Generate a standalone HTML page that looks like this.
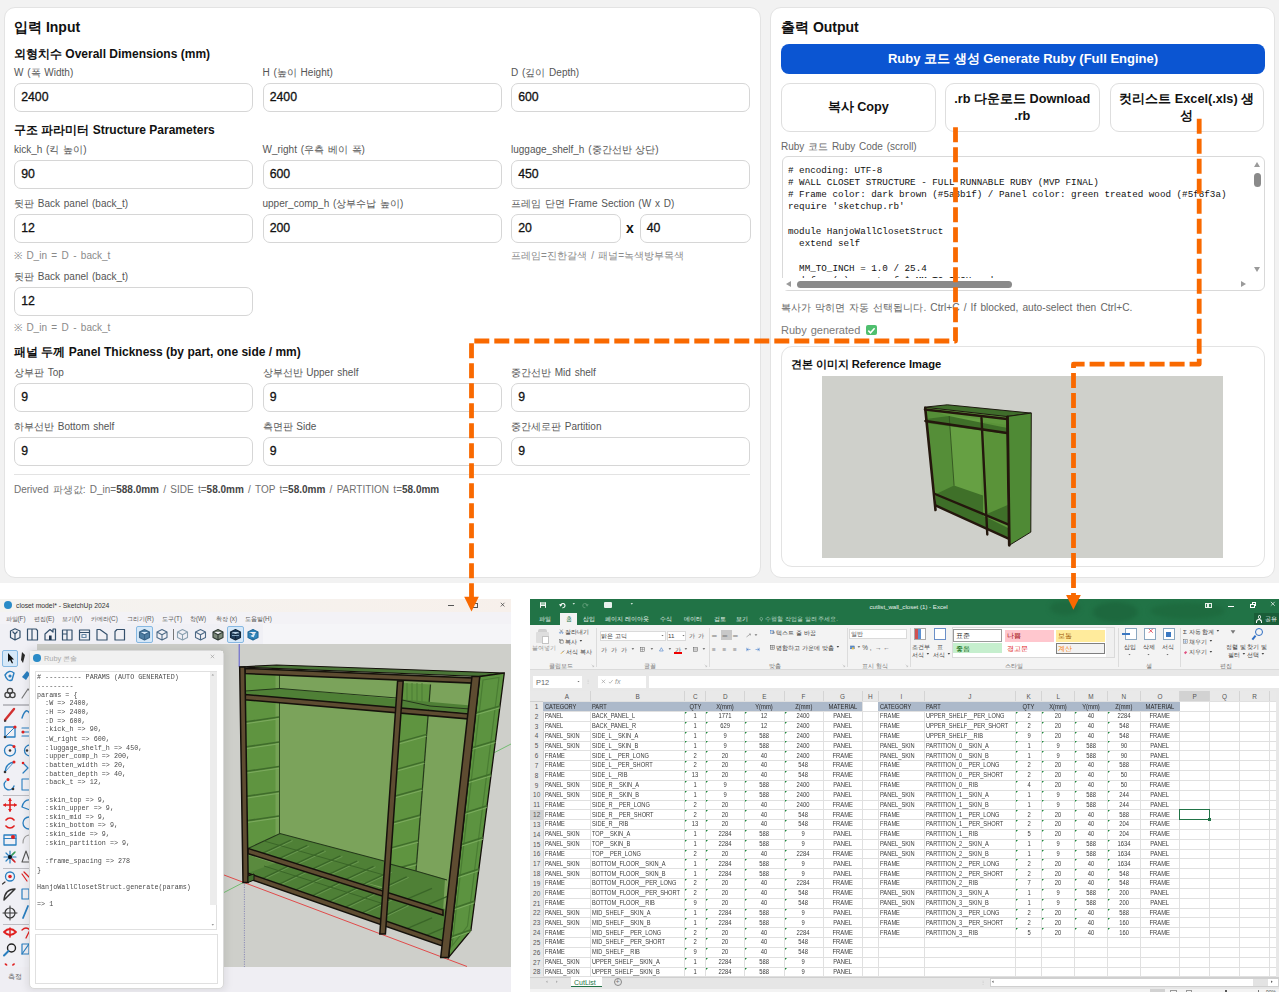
<!DOCTYPE html>
<html><head><meta charset="utf-8">
<style>
*{box-sizing:border-box;margin:0;padding:0}
html,body{width:1279px;height:992px;overflow:hidden;background:#fff}
body{position:relative;font-family:"Liberation Sans",sans-serif;color:#111}
.a{position:absolute;white-space:nowrap}
.card{position:absolute;background:#fff;border:1px solid #e3e3e3;border-radius:11px}
.inp{position:absolute;height:29px;width:239px;border:1px solid #d6d6d6;border-radius:7px;background:#fff;font-size:12.3px;color:#111;padding-left:6.2px;line-height:27px;-webkit-text-stroke:0.3px #111}
.lbl{position:absolute;font-size:10px;word-spacing:1px;color:#555;white-space:nowrap;line-height:12px}
.h2{position:absolute;font-size:12px;font-weight:bold;color:#111;white-space:nowrap;line-height:14px}
.note{position:absolute;font-size:10px;word-spacing:1.6px;color:#8a8a8a;white-space:nowrap;line-height:12px}
.btn{position:absolute;top:83px;height:48.5px;width:154.5px;border:1px solid #dedede;border-radius:9px;background:#fff;font-weight:bold;font-size:12.7px;color:#111;text-align:center;display:flex;align-items:center;justify-content:center;line-height:17px}
.code{position:absolute;left:788px;top:164.5px;font-family:"Liberation Mono",monospace;font-size:9.25px;line-height:12.3px;color:#111;white-space:pre}
</style><style>
.xc{font-size:7.3px;line-height:8px;transform-origin:0 0;transform:scaleX(.78)}
.xcc{text-align:center;transform:none}
.xcc span{display:inline-block;transform:scaleX(.8)}
.tri{width:0;height:0;border-top:2.2px solid #1e8a3c;border-right:2.2px solid transparent}
</style></head><body>
<!-- TOP WEB APP -->
<div class="a" style="left:0;top:0;width:1279px;height:583px;background:#f2f2f2"></div>
<div class="card" style="left:4px;top:7px;width:757px;height:571px"></div>
<div class="card" style="left:770.3px;top:7px;width:504.7px;height:571px"></div>

<div class="a" style="left:14px;top:19px;font-size:14px;font-weight:bold;line-height:17px">입력 Input</div>
<div class="h2" style="left:14px;top:47px">외형치수 Overall Dimensions (mm)</div>
<div class="lbl" style="left:14px;top:67px">W (폭 Width)</div>
<div class="lbl" style="left:262.5px;top:67px">H (높이 Height)</div>
<div class="lbl" style="left:511px;top:67px">D (깊이 Depth)</div>
<div class="inp" style="left:14px;top:83px">2400</div>
<div class="inp" style="left:262.5px;top:83px">2400</div>
<div class="inp" style="left:511px;top:83px">600</div>

<div class="h2" style="left:14px;top:123px">구조 파라미터 Structure Parameters</div>
<div class="lbl" style="left:14px;top:144px">kick_h (킥 높이)</div>
<div class="lbl" style="left:262.5px;top:144px">W_right (우측 베이 폭)</div>
<div class="lbl" style="left:511px;top:144px">luggage_shelf_h (중간선반 상단)</div>
<div class="inp" style="left:14px;top:160px">90</div>
<div class="inp" style="left:262.5px;top:160px">600</div>
<div class="inp" style="left:511px;top:160px">450</div>

<div class="lbl" style="left:14px;top:198px">뒷판 Back panel (back_t)</div>
<div class="lbl" style="left:262.5px;top:198px">upper_comp_h (상부수납 높이)</div>
<div class="lbl" style="left:511px;top:198px">프레임 단면 Frame Section (W x D)</div>
<div class="inp" style="left:14px;top:214px">12</div>
<div class="inp" style="left:262.5px;top:214px">200</div>
<div class="inp" style="left:511px;top:214px;width:110px">20</div>
<div class="a" style="left:626px;top:220px;font-size:14px;font-weight:bold;line-height:16px">x</div>
<div class="inp" style="left:639.5px;top:214px;width:111px">40</div>
<div class="note" style="left:14px;top:250px">※ D_in = D - back_t</div>
<div class="note" style="left:511px;top:250px">프레임=진한갈색 / 패널=녹색방부목색</div>

<div class="lbl" style="left:14px;top:271px">뒷판 Back panel (back_t)</div>
<div class="inp" style="left:14px;top:287px">12</div>
<div class="note" style="left:14px;top:322px">※ D_in = D - back_t</div>

<div class="h2" style="left:14px;top:345px">패널 두께 Panel Thickness (by part, one side / mm)</div>
<div class="lbl" style="left:14px;top:367px">상부판 Top</div>
<div class="lbl" style="left:262.5px;top:367px">상부선반 Upper shelf</div>
<div class="lbl" style="left:511px;top:367px">중간선반 Mid shelf</div>
<div class="inp" style="left:14px;top:383px">9</div>
<div class="inp" style="left:262.5px;top:383px">9</div>
<div class="inp" style="left:511px;top:383px">9</div>
<div class="lbl" style="left:14px;top:421px">하부선반 Bottom shelf</div>
<div class="lbl" style="left:262.5px;top:421px">측면판 Side</div>
<div class="lbl" style="left:511px;top:421px">중간세로판 Partition</div>
<div class="inp" style="left:14px;top:437px">9</div>
<div class="inp" style="left:262.5px;top:437px">9</div>
<div class="inp" style="left:511px;top:437px">9</div>
<div class="a" style="left:14px;top:474px;width:736px;height:1px;background:#e3e3e3"></div>
<div class="lbl" style="left:14px;top:484px;color:#707070;word-spacing:1.5px">Derived 파생값: D_in=<b style="color:#444">588.0mm</b> / SIDE t=<b style="color:#444">58.0mm</b> / TOP t=<b style="color:#444">58.0mm</b> / PARTITION t=<b style="color:#444">58.0mm</b></div>

<!-- OUTPUT -->
<div class="a" style="left:781px;top:19px;font-size:14px;font-weight:bold;line-height:17px">출력 Output</div>
<div class="a" style="left:781px;top:44px;width:484px;height:29.5px;border-radius:8px;background:#0b55d2;color:#fff;font-weight:bold;font-size:13px;text-align:center;line-height:30px">Ruby 코드 생성 Generate Ruby (Full Engine)</div>
<div class="btn" style="left:781px">복사 Copy</div>
<div class="btn" style="left:945px;padding-top:1.5px">.rb 다운로드 Download<br>.rb</div>
<div class="btn" style="left:1109.5px;padding-top:1.5px">컷리스트 Excel(.xls) 생<br>성</div>
<div class="lbl" style="left:781px;top:141px;color:#666">Ruby 코드 Ruby Code (scroll)</div>
<div class="a" style="left:781.5px;top:156px;width:483px;height:134.5px;border:1px solid #d9d9d9;border-radius:6px;background:#fff;overflow:hidden"></div>
<div class="code"># encoding: UTF-8
# WALL CLOSET STRUCTURE - FULL RUNNABLE RUBY (MVP FINAL)
# Frame color: dark brown (#5a3b1f) / Panel color: green treated wood (#5f8f3a)
require 'sketchup.rb'

module HanjoWallClosetStruct
  extend self

  MM_TO_INCH = 1.0 / 25.4
  def mm(v) = v.to_f * MM_TO_INCH end</div>
<div class="a" style="left:782px;top:278px;width:470px;height:12px;background:#fff"></div>
<div class="a" style="left:797px;top:281px;width:215px;height:7px;border-radius:4px;background:#8a8a8a"></div>
<div class="a" style="left:786px;top:281px;width:0;height:0;border-top:3.5px solid transparent;border-bottom:3.5px solid transparent;border-right:5px solid #9a9a9a"></div>
<div class="a" style="left:1241px;top:281px;width:0;height:0;border-top:3.5px solid transparent;border-bottom:3.5px solid transparent;border-left:5px solid #9a9a9a"></div>
<div class="a" style="left:1254px;top:173px;width:7px;height:13.5px;border-radius:4px;background:#8a8a8a"></div>
<div class="a" style="left:1254px;top:162px;width:0;height:0;border-left:3.5px solid transparent;border-right:3.5px solid transparent;border-bottom:5px solid #9a9a9a"></div>
<div class="a" style="left:1254px;top:267px;width:0;height:0;border-left:3.5px solid transparent;border-right:3.5px solid transparent;border-top:5px solid #9a9a9a"></div>
<div class="lbl" style="left:781px;top:302px;color:#666;font-size:10.2px;word-spacing:1.3px">복사가 막히면 자동 선택됩니다. Ctrl+C / If blocked, auto-select then Ctrl+C.</div>
<div class="lbl" style="left:781px;top:324px;color:#7a7a7a;font-size:11px">Ruby generated</div>
<div class="a" style="left:866px;top:324.5px;width:10.5px;height:10.5px;background:#4fbf6e;border-radius:2px"></div><svg class="a" style="left:866px;top:324.5px" width="11" height="11"><path d="M2.3,5.6 L4.5,7.8 L8.6,3.2" fill="none" stroke="#fff" stroke-width="1.5"/></svg>
<div class="card" style="left:781px;top:346px;width:483.5px;height:221px;border-radius:11px"></div>
<div class="h2" style="left:790.5px;top:357px;font-size:11.2px">견본 이미지 Reference Image</div>
<div class="a" style="left:822px;top:376px;width:401px;height:182px;background:#cdcdc9"></div>

<svg class="a" style="left:0;top:0" width="1279" height="992" viewBox="0 0 1279 992">
<rect x="822" y="376" width="401" height="182" fill="#cfd0cb"/>
<polygon points="924.5,407 1007,416 1008,537 936,505" fill="#5f983d"/>
<polygon points="949,416 981.5,419 981.5,500 954,486" fill="#66a043"/>
<polygon points="925,409 949,416 954,486 936,496" fill="#558e38"/>
<polygon points="984,422 1007,425 1007,505 988,514" fill="#5a9339"/>
<polygon points="926,419 949,416 1007,428 1007,434 926,423" fill="#3f7029"/>
<polygon points="984,426 1007,428 1007,434 984,430" fill="#3f7029"/>
<polygon points="936,494 954,485.6 983,495.5 983,526 936,500" fill="#3f7029"/>
<polygon points="988,513.6 1007.5,505 1008,524 988,517" fill="#3f7029"/>
<polygon points="936,496 988,518 1008,528 1008,538 936,505.7" fill="#3d6e28"/>
<polygon points="924.3,407.2 947.3,404.8 1031.3,413.1 1006.9,416.5" fill="#3f6d2b" stroke="#1e1a10" stroke-width="1"/>
<polygon points="1006.9,416.5 1031.3,413.1 1030.8,532.1 1009.3,545.3" fill="#4f8a35" stroke="#1e1a10" stroke-width="1"/>
<line x1="949.2" y1="416" x2="954.1" y2="485.6" stroke="#2c4a1c" stroke-width=".8"/>
<g stroke="#24170d" fill="none" stroke-linecap="round">
<line x1="925" y1="409.5" x2="1007" y2="419" stroke-width="2.6"/>
<line x1="925.5" y1="421" x2="1007" y2="433" stroke-width="2.6"/>
<line x1="935" y1="494" x2="1008" y2="524.3" stroke-width="2.4"/>
<line x1="936" y1="505.7" x2="1008" y2="538.4" stroke-width="2.4"/>
<line x1="925.2" y1="408" x2="935.5" y2="510" stroke-width="2.6"/>
<line x1="981.5" y1="418" x2="987.3" y2="534.5" stroke-width="2.4"/>
<line x1="1007.5" y1="417" x2="1009.3" y2="545.3" stroke-width="2.8"/>
</g>
</svg>
<div class="a" style="left:0px;top:599px;width:511px;height:393px;background:#f2f1f5;overflow:hidden"></div>
<div class="a" style="left:0px;top:599px;width:511px;height:13px;background:linear-gradient(90deg,#f4f3f0,#f7f0eb)"></div>
<div class="a" style="left:4px;top:601px;width:8px;height:8px;background:#2a8bc7;border-radius:50%"></div>
<div class="a" style="left:16px;top:601px;font-size:6.8px;color:#333;line-height:9px">closet model* - SketchUp 2024</div>
<div class="a" style="left:448px;top:605px;width:6px;height:0.9px;background:#555"></div>
<div class="a" style="left:472px;top:602.5px;width:5.5px;height:5px;border:0.9px solid #555"></div>
<div class="a" style="left:500px;top:600.2px;font-size:7.5px;color:#333;line-height:9px"><svg style="display:inline-block;vertical-align:0;overflow:visible" width="0.7em" height="0.7em" viewBox="0 0 10 10"><path d="M1.5,1.5 L8.5,8.5 M8.5,1.5 L1.5,8.5" stroke="currentColor" stroke-width="1.3" fill="none"/></svg></div>
<div class="a" style="left:0px;top:612px;width:511px;height:12px;background:#f3f2f6"></div>
<div class="a" style="left:5.5px;top:613.8px;font-size:6.3px;color:#5a5a5a;line-height:9px">파일(F)</div>
<div class="a" style="left:34px;top:613.8px;font-size:6.3px;color:#5a5a5a;line-height:9px">편집(E)</div>
<div class="a" style="left:62px;top:613.8px;font-size:6.3px;color:#5a5a5a;line-height:9px">보기(V)</div>
<div class="a" style="left:91px;top:613.8px;font-size:6.3px;color:#5a5a5a;line-height:9px">카메라(C)</div>
<div class="a" style="left:127px;top:613.8px;font-size:6.3px;color:#5a5a5a;line-height:9px">그리기(R)</div>
<div class="a" style="left:162px;top:613.8px;font-size:6.3px;color:#5a5a5a;line-height:9px">도구(T)</div>
<div class="a" style="left:190px;top:613.8px;font-size:6.3px;color:#5a5a5a;line-height:9px">창(W)</div>
<div class="a" style="left:216px;top:613.8px;font-size:6.3px;color:#5a5a5a;line-height:9px">확장 (x)</div>
<div class="a" style="left:245px;top:613.8px;font-size:6.3px;color:#5a5a5a;line-height:9px">도움말(H)</div>
<div class="a" style="left:0px;top:624px;width:511px;height:20px;background:#f0f0f5"></div>
<div class="a" style="left:263px;top:624px;width:248px;height:20px;background:#f5f5f8"></div>
<div class="a" style="left:136.3px;top:626.3px;width:16.9px;height:16.6px;background:#d6e8f8;border:1px solid #86b8e2;border-radius:2px"></div>
<div class="a" style="left:227px;top:626.3px;width:16.5px;height:16.6px;background:#d6e8f8;border:1px solid #86b8e2;border-radius:2px"></div>
<div class="a" style="left:172.5px;top:629px;width:1.1px;height:11px;background:#777"></div>
<svg class="a" style="left:0;top:0" width="270" height="646" viewBox="0 0 270 646"><g fill="none" stroke="#34506c" stroke-width="1.2" stroke-linejoin="round">
<path d="M10.5,631 L15,628.8 L20,631 L20,637.5 L15,640 L10.5,637.5 Z M15,634 L15,640 M15,634 L12.5,631.5 M15,634 L17.5,631.5"/>
<path d="M27.5,629 L36,629 L37.5,630.5 L37.5,640 L27.5,640 Z M32,629 L32,640"/>
<path d="M45,640 L45,634 L50,629.5 L53,632 L53,629 L55.5,629 L55.5,640 Z"/>
<rect x="49" y="635.5" width="2.6" height="4.5" fill="#1d3550" stroke="none"/>
<path d="M62.5,630 L72,630 L72,640 L62.5,640 Z M67,630 L67,640 M62.5,634 L67,634"/>
<path d="M79.5,630 L89.5,630 L89.5,640 L79.5,640 Z M79.5,632.5 L89.5,632.5"/>
<rect x="82" y="634.5" width="4" height="3" stroke="#6a8aa8"/>
<path d="M97,640 L97,629.5 L100,629.5 L107,634.5 L107,640 Z"/>
<path d="M115,631.5 L117,629.5 L124.5,629.5 L124.5,640 L115,640 Z"/>
</g>
<path d="M139.5,632 L144.5,629.5 L149.5,632 L149.5,637.5 L144.5,640 L139.5,637.5 Z M139.5,632 L144.5,634.7 L149.5,632 M144.5,634.7 L144.5,640" fill="#4f7ea3" stroke="#3a6488" stroke-width="1.1" stroke-linejoin="round"/>
<path d="M157,632 L162,629.5 L167,632 L167,637.5 L162,640 L157,637.5 Z M157,632 L162,634.7 L167,632 M162,634.7 L162,640" fill="none" stroke="#4d6a86" stroke-width="1.1" stroke-linejoin="round"/>
<path d="M177.5,632 L182.5,629.5 L187.5,632 L187.5,637.5 L182.5,640 L177.5,637.5 Z M177.5,632 L182.5,634.7 L187.5,632 M182.5,634.7 L182.5,640" fill="none" stroke="#8aa0b0" stroke-width="1.1" stroke-linejoin="round"/>
<path d="M195.5,632 L200.5,629.5 L205.5,632 L205.5,637.5 L200.5,640 L195.5,637.5 Z M195.5,632 L200.5,634.7 L205.5,632 M200.5,634.7 L200.5,640" fill="none" stroke="#4d6a86" stroke-width="1.1" stroke-linejoin="round"/>
<path d="M213,632 L218,629.5 L223,632 L223,637.5 L218,640 L213,637.5 Z M213,632 L218,634.7 L223,632 M218,634.7 L218,640" fill="#7d8a7a" stroke="#2f3a33" stroke-width="1.1" stroke-linejoin="round"/>
<path d="M230.5,632 L235.5,629.5 L240.5,632 L240.5,637.5 L235.5,640 L230.5,637.5 Z M230.5,632 L235.5,634.7 L240.5,632 M235.5,634.7 L235.5,640" fill="#1f3d5c" stroke="#12263a" stroke-width="1.1" stroke-linejoin="round"/>
<path d="M248,632 L253,629.5 L258,632 L258,637.5 L253,640 L248,637.5 Z M248,632 L253,634.7 L258,632 M253,634.7 L253,640" fill="#2f86bd" stroke="#236a98" stroke-width="1.1" stroke-linejoin="round"/>
<path d="M250.5,636 L256,632 L253.5,637.5 Z" fill="#d9ecf7"/>
<path d="M232,633 L239,633 M232,635.5 L239,635.5" stroke="#8fb0c8" stroke-width=".9"/>
</svg>
<div class="a" style="left:0px;top:644px;width:37px;height:323px;background:#f0f0f5"></div>
<div class="a" style="left:37px;top:644px;width:474px;height:323px;background:#cecfca"></div>
<div class="a" style="left:0px;top:967px;width:511px;height:25px;background:#efeef3"></div>
<div class="a" style="left:8px;top:972px;font-size:6.6px;color:#666;line-height:9px">측정</div>
<div class="a" style="left:2px;top:650px;width:16px;height:17px;background:#d6e8f8;border:1px solid #86b8e2;border-radius:2px"></div>
<svg class="a" style="left:0;top:640px" width="40" height="340" viewBox="0 640 40 340"><g stroke-linejoin="round" stroke-linecap="round">
<path d="M8,653 L8,662 L10,660 L12,663.5 L13,663 L11.5,659.5 L14,659.5 Z" fill="#111"/>
<path d="M22,652 L25,655 L23,663 L21,660 Z" fill="#2a2a2a"/>
<path d="M5,675 Q9,669 14,673 L12,680 Q7,682 5,675 Z" fill="none" stroke="#2a7fc0" stroke-width="1.4"/><circle cx="10" cy="676" r="1.6" fill="#2a7fc0"/>
<path d="M22,677 L27,671 L30,674 L26,680 Z" fill="#2a7fc0"/>
<circle cx="7.5" cy="695" r="2.6" fill="none" stroke="#444" stroke-width="1.3"/><circle cx="12.5" cy="695" r="2.6" fill="none" stroke="#444" stroke-width="1.3"/><circle cx="10" cy="691" r="2.6" fill="none" stroke="#444" stroke-width="1.3"/>
<path d="M22,698 L28,689 L30,691" fill="none" stroke="#777" stroke-width="1.2"/>
<path d="M5,720 L14,709" stroke="#d23030" stroke-width="2.4"/><path d="M5,720 L4.5,721.5 L6,721" stroke="#333" stroke-width="1"/>
<path d="M22,718 Q26,706 30,714" fill="none" stroke="#2a7fc0" stroke-width="1.4"/>
<rect x="5" y="727" width="10" height="10" fill="none" stroke="#2a7fc0" stroke-width="1.3"/><path d="M5,737 L15,727" stroke="#2a7fc0" stroke-width="1"/><circle cx="15" cy="727" r="1.6" fill="#e02020"/><circle cx="5" cy="737" r="1.3" fill="#333"/>
<path d="M22,728 L30,728 M22,732 L30,732 M22,736 L30,736" stroke="#2a7fc0" stroke-width="1.2"/><circle cx="23" cy="732" r="1.5" fill="#e02020"/>
<circle cx="10" cy="750.5" r="5.5" fill="none" stroke="#2a7fc0" stroke-width="1.3"/><circle cx="10" cy="750.5" r="1.3" fill="#333"/><circle cx="14" cy="746.5" r="1.5" fill="#e02020"/>
<path d="M30,745 A5.5,5.5 0 0 0 30,756" fill="none" stroke="#2a7fc0" stroke-width="1.3"/><circle cx="27" cy="750.5" r="1.2" fill="#333"/>
<path d="M5,772 Q6,763 14,762" fill="none" stroke="#2a7fc0" stroke-width="1.3"/><path d="M5,772 L14,762" stroke="#2a7fc0" stroke-width=".8"/><circle cx="14" cy="762" r="1.5" fill="#e02020"/><circle cx="5" cy="772" r="1.3" fill="#333"/>
<path d="M23,763 L28,768 L23,773" fill="none" stroke="#2a7fc0" stroke-width="1.2"/><circle cx="23" cy="763" r="1.3" fill="#e02020"/>
<path d="M6,781 A5,5 0 1 0 14,786" fill="none" stroke="#2a7fc0" stroke-width="1.3"/><circle cx="8" cy="779.5" r="1.5" fill="#e02020"/><circle cx="13" cy="789" r="1.3" fill="#333"/>
<rect x="22" y="779" width="8" height="11" fill="none" stroke="#2a7fc0" stroke-width="1.1"/>
<path d="M10,799 L10,811 M4,805 L16,805" stroke="#e02020" stroke-width="1.6"/><path d="M10,798 L8,801 L12,801 Z M10,812 L8,809 L12,809 Z M3,805 L6,803 L6,807 Z M17,805 L14,803 L14,807 Z" fill="#e02020"/>
<path d="M22,807 Q24,799 30,800 L30,810 Z" fill="none" stroke="#2a7fc0" stroke-width="1.3"/>
<path d="M6,820 A5,5 0 0 1 14,820 M14,826 A5,5 0 0 1 6,826" fill="none" stroke="#e02020" stroke-width="1.6"/>
<path d="M29,817 A6,6 0 1 0 29,829" fill="none" stroke="#2a7fc0" stroke-width="1.3"/>
<rect x="4" y="835" width="12" height="10" fill="none" stroke="#2a7fc0" stroke-width="1.3"/><path d="M4,838.5 L16,838.5" stroke="#2a7fc0" stroke-width="1"/><circle cx="13" cy="837" r="2" fill="#e02020"/>
<path d="M23,843 Q23,836 29,835" fill="none" stroke="#999" stroke-width="1.1"/>
<path d="M10,851 L10,863 M4,857 L16,857 M6,853 L14,861 M14,853 L6,861" stroke="#2a7fc0" stroke-width="1.2"/><circle cx="10" cy="857" r="2" fill="#111"/><path d="M12,859 L15,862" stroke="#e02020" stroke-width="1.5"/><path d="M12,855 L15,852" stroke="#3aa050" stroke-width="1.5"/>
<path d="M22,862 L26,851 L30,862 Z" fill="none" stroke="#555" stroke-width="1.1"/>
<circle cx="10" cy="876.5" r="4.5" fill="none" stroke="#2a7fc0" stroke-width="1.3"/><circle cx="10" cy="876.5" r="1.8" fill="#e02020"/><path d="M5,882 L2.5,884" stroke="#333" stroke-width="1.2"/>
<path d="M22,874 L27,881 M24,872 L29,877" stroke="#e02020" stroke-width="1.2"/>
<path d="M4,900 Q5,889 15,889 L4,900 Z" fill="none" stroke="#333" stroke-width="1.5"/>
<rect x="22" y="889" width="7" height="10" fill="none" stroke="#2a7fc0" stroke-width="1.2"/>
<circle cx="10" cy="913" r="5" fill="none" stroke="#333" stroke-width="1.2"/><path d="M3,913 L17,913 M10,906 L10,920" stroke="#333" stroke-width="1"/>
<path d="M23,918 L28,906" stroke="#2a7fc0" stroke-width="1.8"/>
<path d="M4,932 Q10,926 16,932 Q10,938 4,932" fill="none" stroke="#e02020" stroke-width="1.8"/><path d="M10,928 L10,937" stroke="#e02020" stroke-width="1.5"/>
<path d="M22,930 Q26,926 30,930 L26,938" fill="none" stroke="#e02020" stroke-width="1.3"/>
<circle cx="11.5" cy="948" r="4" fill="none" stroke="#222" stroke-width="1.4"/><path d="M8.5,951 L4,955.5" stroke="#2a7fc0" stroke-width="2"/>
<rect x="22" y="944" width="7" height="10" fill="none" stroke="#2a7fc0" stroke-width="1.2"/><path d="M22,954 L29,944" stroke="#2a7fc0" stroke-width="1.2"/>
<ellipse cx="6" cy="964.5" rx="1.6" ry="1" fill="#e02020" transform="rotate(35 6 964.5)"/><ellipse cx="13.5" cy="964.5" rx="1.6" ry="1" fill="#e02020" transform="rotate(-35 13.5 964.5)"/>
</g></svg>
<div class="a" style="left:3px;top:704.4px;width:28px;height:1.3px;background:#bdbdc3"></div>
<div class="a" style="left:3px;top:795px;width:28px;height:1.3px;background:#bdbdc3"></div>
<div class="a" style="left:3px;top:868px;width:28px;height:1.3px;background:#bdbdc3"></div>
<div class="a" style="left:3px;top:924px;width:28px;height:1.3px;background:#bdbdc3"></div>
<svg class="a" style="left:0;top:0" width="1279" height="992" viewBox="0 0 1279 992">
<defs><clipPath id="vp"><rect x="37" y="644" width="474" height="323"/></clipPath></defs>
<g clip-path="url(#vp)">
<line x1="239.2" y1="644" x2="239.2" y2="667" stroke="#5a5ad0" stroke-width="1"/>
<line x1="224" y1="875" x2="467" y2="966.5" stroke="#e23b3b" stroke-width="0.9"/>
<line x1="224" y1="892.5" x2="511" y2="744" stroke="#5cb85c" stroke-width="0.8"/>
<line x1="244.4" y1="882" x2="244.4" y2="967" stroke="#7a7ab0" stroke-width="0.8" stroke-dasharray="1.2 1.2"/>
<polygon points="242,668 476,677 445,946 248,878.6" fill="#7ba35b"/>
<polygon points="239.7,667 276.6,665 504.3,673 479.7,676.5" fill="#4a7537" stroke="#15110b" stroke-width="1.2"/>
<polygon points="245,673 280,671 280,833.5 248,848.5" fill="#5f9440"/>
<line x1="279.5" y1="672" x2="279.5" y2="834" stroke="#2f4a20" stroke-width="1"/>
<polygon points="275.5,671.5 279,671.5 279,834 275.5,836" fill="#86ad66" opacity=".55"/>
<line x1="245" y1="722" x2="279" y2="717" stroke="#3f6c2b" stroke-width="1.5"/>
<line x1="245" y1="723.8" x2="279" y2="718.8" stroke="#80ad62" stroke-width=".9"/>
<line x1="245" y1="747" x2="279" y2="742" stroke="#3f6c2b" stroke-width="1.5"/>
<line x1="245" y1="748.8" x2="279" y2="743.8" stroke="#80ad62" stroke-width=".9"/>
<line x1="245" y1="771.5" x2="279" y2="766.5" stroke="#3f6c2b" stroke-width="1.5"/>
<line x1="245" y1="773.3" x2="279" y2="768.3" stroke="#80ad62" stroke-width=".9"/>
<line x1="245" y1="796.5" x2="279" y2="791.5" stroke="#3f6c2b" stroke-width="1.5"/>
<line x1="245" y1="798.3" x2="279" y2="793.3" stroke="#80ad62" stroke-width=".9"/>
<line x1="245" y1="821" x2="279" y2="816" stroke="#3f6c2b" stroke-width="1.5"/>
<line x1="245" y1="822.8" x2="279" y2="817.8" stroke="#80ad62" stroke-width=".9"/>
<polygon points="402.8,683 430.5,684.5 416,871 385.7,888" fill="#5f9440"/>
<line x1="430.5" y1="684.5" x2="416" y2="871" stroke="#24381a" stroke-width="1.2"/>
<line x1="397.85" y1="742.4" x2="426.62" y2="734.4" stroke="#3f6c2b" stroke-width="1.5"/>
<line x1="397.85" y1="744.2" x2="426.62" y2="736.2" stroke="#80ad62" stroke-width=".9"/>
<line x1="395.58" y1="769.6" x2="424.51" y2="761.6" stroke="#3f6c2b" stroke-width="1.5"/>
<line x1="395.58" y1="771.4" x2="424.51" y2="763.4" stroke="#80ad62" stroke-width=".9"/>
<line x1="393.33" y1="796.5" x2="422.41" y2="788.5" stroke="#3f6c2b" stroke-width="1.5"/>
<line x1="393.33" y1="798.3" x2="422.41" y2="790.3" stroke="#80ad62" stroke-width=".9"/>
<line x1="391.12" y1="823" x2="420.35" y2="815" stroke="#3f6c2b" stroke-width="1.5"/>
<line x1="391.12" y1="824.8" x2="420.35" y2="816.8" stroke="#80ad62" stroke-width=".9"/>
<line x1="389" y1="848.4" x2="418.38" y2="840.4" stroke="#3f6c2b" stroke-width="1.5"/>
<line x1="389" y1="850.2" x2="418.38" y2="842.2" stroke="#80ad62" stroke-width=".9"/>
<line x1="387.12" y1="871" x2="416.62" y2="863" stroke="#3f6c2b" stroke-width="1.5"/>
<line x1="387.12" y1="872.8" x2="416.62" y2="864.8" stroke="#80ad62" stroke-width=".9"/>
<line x1="407" y1="683" x2="407" y2="707" stroke="#4d7d35" stroke-width="1"/>
<line x1="412" y1="683" x2="412" y2="707" stroke="#4d7d35" stroke-width="1"/>
<line x1="417" y1="683" x2="417" y2="707" stroke="#4d7d35" stroke-width="1"/>
<line x1="422" y1="683" x2="422" y2="707" stroke="#4d7d35" stroke-width="1"/>
<polygon points="479.7,676.5 504.3,673 470.9,930.4 448.6,957.5" fill="#5c9340" stroke="#15110b" stroke-width="1.3"/>
<polygon points="483,680 499,677.5 467.5,926 452,946" fill="none" stroke="#4a7d33" stroke-width="1.2"/>
<line x1="475.66" y1="713" x2="500.02" y2="706" stroke="#3f6f2b" stroke-width="1.5"/>
<line x1="475.66" y1="714.8" x2="500.02" y2="707.8" stroke="#7fb062" stroke-width=".9"/>
<line x1="471.82" y1="747.7" x2="495.52" y2="740.7" stroke="#3f6f2b" stroke-width="1.5"/>
<line x1="471.82" y1="749.5" x2="495.52" y2="742.5" stroke="#7fb062" stroke-width=".9"/>
<line x1="468.13" y1="781" x2="491.19" y2="774" stroke="#3f6f2b" stroke-width="1.5"/>
<line x1="468.13" y1="782.8" x2="491.19" y2="775.8" stroke="#7fb062" stroke-width=".9"/>
<line x1="464.63" y1="812.7" x2="487.08" y2="805.7" stroke="#3f6f2b" stroke-width="1.5"/>
<line x1="464.63" y1="814.5" x2="487.08" y2="807.5" stroke="#7fb062" stroke-width=".9"/>
<line x1="461.11" y1="844.5" x2="482.95" y2="837.5" stroke="#3f6f2b" stroke-width="1.5"/>
<line x1="461.11" y1="846.3" x2="482.95" y2="839.3" stroke="#7fb062" stroke-width=".9"/>
<line x1="457.62" y1="876" x2="478.87" y2="869" stroke="#3f6f2b" stroke-width="1.5"/>
<line x1="457.62" y1="877.8" x2="478.87" y2="870.8" stroke="#7fb062" stroke-width=".9"/>
<line x1="454.08" y1="908" x2="474.71" y2="901" stroke="#3f6f2b" stroke-width="1.5"/>
<line x1="454.08" y1="909.8" x2="474.71" y2="902.8" stroke="#7fb062" stroke-width=".9"/>
<line x1="450.9" y1="936.7" x2="470.99" y2="929.7" stroke="#3f6f2b" stroke-width="1.5"/>
<line x1="450.9" y1="938.5" x2="470.99" y2="931.5" stroke="#7fb062" stroke-width=".9"/>
<polygon points="245,691 280,688.5 476,706 472,713 245,696" fill="#4f8036"/>
<polyline points="245,691 280,688.5 397,698" fill="none" stroke="#24381a" stroke-width="1"/>
<polyline points="402,700 430,706 470,709" fill="none" stroke="#24381a" stroke-width="1"/>
<polygon points="248,848.5 280,833.5 384,861 386,888 248,852" fill="#4f8036"/>
<polygon points="386,862 416,871 445,879 443,912 386,893" fill="#4f8036"/>
<polyline points="248,848.5 280,833.5 384,861" fill="none" stroke="#24381a" stroke-width="1.1"/>
<polyline points="386,863 416,871 447,880" fill="none" stroke="#24381a" stroke-width="1.1"/>
<polygon points="248,855 443,917 443,940 248,875" fill="#5a8a3e"/>
<polygon points="248,873 290,858 445,909 443,940" fill="#4e7f36"/>
<line x1="259.7" y1="854.7" x2="290.7" y2="840.2" stroke="#3a6628" stroke-width="1.4"/>
<line x1="261.7" y1="855.2" x2="292.7" y2="840.7" stroke="#6f9d55" stroke-width=".8"/>
<line x1="259.7" y1="879.86" x2="290.7" y2="864.86" stroke="#3a6628" stroke-width="1.4"/>
<line x1="261.7" y1="880.36" x2="292.7" y2="865.36" stroke="#6f9d55" stroke-width=".8"/>
<line x1="276.27" y1="859.95" x2="307.27" y2="845.45" stroke="#3a6628" stroke-width="1.4"/>
<line x1="278.27" y1="860.45" x2="309.27" y2="845.95" stroke="#6f9d55" stroke-width=".8"/>
<line x1="276.27" y1="885.62" x2="307.27" y2="870.62" stroke="#3a6628" stroke-width="1.4"/>
<line x1="278.27" y1="886.12" x2="309.27" y2="871.12" stroke="#6f9d55" stroke-width=".8"/>
<line x1="292.85" y1="865.19" x2="323.85" y2="850.69" stroke="#3a6628" stroke-width="1.4"/>
<line x1="294.85" y1="865.69" x2="325.85" y2="851.19" stroke="#6f9d55" stroke-width=".8"/>
<line x1="292.85" y1="891.37" x2="323.85" y2="876.37" stroke="#3a6628" stroke-width="1.4"/>
<line x1="294.85" y1="891.87" x2="325.85" y2="876.87" stroke="#6f9d55" stroke-width=".8"/>
<line x1="309.43" y1="870.44" x2="340.43" y2="855.94" stroke="#3a6628" stroke-width="1.4"/>
<line x1="311.43" y1="870.94" x2="342.43" y2="856.44" stroke="#6f9d55" stroke-width=".8"/>
<line x1="309.43" y1="897.13" x2="340.43" y2="882.13" stroke="#3a6628" stroke-width="1.4"/>
<line x1="311.43" y1="897.63" x2="342.43" y2="882.63" stroke="#6f9d55" stroke-width=".8"/>
<line x1="326" y1="875.68" x2="357" y2="861.18" stroke="#3a6628" stroke-width="1.4"/>
<line x1="328" y1="876.18" x2="359" y2="861.68" stroke="#6f9d55" stroke-width=".8"/>
<line x1="326" y1="902.88" x2="357" y2="887.88" stroke="#3a6628" stroke-width="1.4"/>
<line x1="328" y1="903.38" x2="359" y2="888.38" stroke="#6f9d55" stroke-width=".8"/>
<line x1="342.57" y1="880.92" x2="373.57" y2="866.42" stroke="#3a6628" stroke-width="1.4"/>
<line x1="344.57" y1="881.42" x2="375.57" y2="866.92" stroke="#6f9d55" stroke-width=".8"/>
<line x1="342.57" y1="908.63" x2="373.57" y2="893.63" stroke="#3a6628" stroke-width="1.4"/>
<line x1="344.57" y1="909.13" x2="375.57" y2="894.13" stroke="#6f9d55" stroke-width=".8"/>
<line x1="359.15" y1="886.17" x2="390.15" y2="871.67" stroke="#3a6628" stroke-width="1.4"/>
<line x1="361.15" y1="886.67" x2="392.15" y2="872.17" stroke="#6f9d55" stroke-width=".8"/>
<line x1="359.15" y1="914.39" x2="390.15" y2="899.39" stroke="#3a6628" stroke-width="1.4"/>
<line x1="361.15" y1="914.89" x2="392.15" y2="899.89" stroke="#6f9d55" stroke-width=".8"/>
<line x1="375.73" y1="891.41" x2="406.73" y2="876.91" stroke="#3a6628" stroke-width="1.4"/>
<line x1="377.73" y1="891.91" x2="408.73" y2="877.41" stroke="#6f9d55" stroke-width=".8"/>
<line x1="375.73" y1="920.14" x2="406.73" y2="905.14" stroke="#3a6628" stroke-width="1.4"/>
<line x1="377.73" y1="920.64" x2="408.73" y2="905.64" stroke="#6f9d55" stroke-width=".8"/>
<line x1="404" y1="900.36" x2="432" y2="888.36" stroke="#3a6628" stroke-width="1.4"/>
<line x1="404" y1="929.96" x2="432" y2="917.96" stroke="#3a6628" stroke-width="1.4"/>
<line x1="423.5" y1="906.53" x2="451.5" y2="894.53" stroke="#3a6628" stroke-width="1.4"/>
<line x1="423.5" y1="936.73" x2="451.5" y2="924.73" stroke="#3a6628" stroke-width="1.4"/>
<line x1="264" y1="841" x2="384" y2="875" stroke="#3a6628" stroke-width="1"/>
<line x1="264" y1="866" x2="384" y2="904" stroke="#3a6628" stroke-width="1"/>
<polygon points="245,668.4 473,677.9 473,683.1 245,673.6" fill="#5e4c31" stroke="#15110b" stroke-width="1.5"/>
<polygon points="245,694.6 470,713.9 470,719.1 245,699.8" fill="#5e4c31" stroke="#15110b" stroke-width="1.5"/>
<polygon points="248,848.4 443,910.1 443,915.3 248,853.6" fill="#5e4c31" stroke="#15110b" stroke-width="1.5"/>
<polygon points="248,873.2 443,940.9 443,946.1 248,878.4" fill="#5e4c31" stroke="#15110b" stroke-width="1.5"/>
<polygon points="239.7,667 244.9,667 248.2,882.5 243,882.5" fill="#5e4c31" stroke="#15110b" stroke-width="1.5"/>
<polygon points="397.6,681 403.2,681 385.4,934 379.8,934" fill="#5e4c31" stroke="#15110b" stroke-width="1.5"/>
<polygon points="472,676.5 479.8,676.5 448.5,957.5 440.7,957.5" fill="#5e4c31" stroke="#15110b" stroke-width="1.5"/>
<polygon points="248,876 254,874 254,880 248,882.5" fill="#3f6e2c" stroke="#15110b" stroke-width="1"/>
</g></svg>
<div class="a" style="left:26px;top:647px;width:201px;height:345px;background:rgba(0,0,0,0.06);border-radius:7px;filter:blur(3px)"></div>
<div class="a" style="left:29px;top:649.5px;width:195px;height:339.5px;background:#fff;border:1px solid #d9d9d9;border-radius:5px;overflow:hidden"></div>
<div class="a" style="left:30px;top:650.5px;width:193px;height:14px;background:#f1f1f1"></div>
<div class="a" style="left:33px;top:654px;width:7.5px;height:7.5px;background:#2a8bc7;border-radius:50%"></div>
<div class="a" style="left:44px;top:653.5px;font-size:7.4px;color:#aaa;line-height:9px">Ruby 콘솔</div>
<div class="a" style="left:210px;top:651.5px;font-size:7px;color:#999;line-height:10px"><svg style="display:inline-block;vertical-align:0;overflow:visible" width="0.7em" height="0.7em" viewBox="0 0 10 10"><path d="M1.5,1.5 L8.5,8.5 M8.5,1.5 L1.5,8.5" stroke="currentColor" stroke-width="1.3" fill="none"/></svg></div>
<div class="a" style="left:34.6px;top:671.4px;width:182.5px;height:258.5px;border:1px solid #e0e0e0;background:#fff"></div>
<div class="a" style="left:209.8px;top:672px;width:7px;height:233px;background:#ececec"></div>
<div class="a" style="left:210.5px;top:671px;font-size:6px;color:#999;line-height:8px"><svg style="display:inline-block;vertical-align:0.05em;overflow:visible" width="0.6em" height="0.6em" viewBox="0 0 10 10"><path d="M1.5,7 L8.5,7 L5,2.5 Z" fill="currentColor"/></svg></div>
<div class="a" style="left:210.5px;top:921px;font-size:6px;color:#999;line-height:8px"><svg style="display:inline-block;vertical-align:0.05em;overflow:visible" width="0.6em" height="0.6em" viewBox="0 0 10 10"><path d="M1.5,3 L8.5,3 L5,7.5 Z" fill="currentColor"/></svg></div>
<div class="a" style="left:37px;top:672.8px;font-family:'Liberation Mono',monospace;font-size:6.75px;line-height:8.074px;color:#4a4a4a;white-space:pre;transform:scaleY(1.08);transform-origin:0 0"># --------- PARAMS (AUTO GENERATED)
---------
params = {
  :W =&gt; 2400,
  :H =&gt; 2400,
  :D =&gt; 600,
  :kick_h =&gt; 90,
  :W_right =&gt; 600,
  :luggage_shelf_h =&gt; 450,
  :upper_comp_h =&gt; 200,
  :batten_width =&gt; 20,
  :batten_depth =&gt; 40,
  :back_t =&gt; 12,

  :skin_top =&gt; 9,
  :skin_upper =&gt; 9,
  :skin_mid =&gt; 9,
  :skin_bottom =&gt; 9,
  :skin_side =&gt; 9,
  :skin_partition =&gt; 9,

  :frame_spacing =&gt; 278
}

HanjoWallClosetStruct.generate(params)

=&gt; 1</div>
<div class="a" style="left:34.6px;top:933.6px;width:183.3px;height:50px;border:1px solid #e0e0e0;background:#fff"></div><div class="a" style="left:530px;top:599px;width:749px;height:393px;overflow:hidden;background:#fff">
<div class="a" style="left:0px;top:0px;width:749px;height:26px;background:#217346"></div>
<div class="a" style="left:520px;top:2px;width:30px;height:14px;background:#1e6a3f;border-radius:50%;filter:blur(2px)"></div>
<div class="a" style="left:563px;top:3px;width:45px;height:20px;background:#1d683e;border-radius:50%;filter:blur(2px)"></div>
<div class="a" style="left:620px;top:4px;width:75px;height:16px;background:#1e6b3f;border-radius:50%;filter:blur(2px)"></div>
<div class="a" style="left:339.5px;top:2.5px;font-size:6.1px;color:#e9f2ec;line-height:9px">cutlist_wall_closet (1) - Excel</div>
<div class="a" style="left:9.7px;top:2.5px;width:6.8px;height:6.5px;background:#f4f8f5;border-radius:.8px"></div>
<div class="a" style="left:11px;top:3.4px;width:4.2px;height:2.2px;background:#9fc6ad"></div>
<div class="a" style="left:11.3px;top:6.6px;width:3.6px;height:2.4px;background:#2a6e46"></div>
<div class="a" style="left:29px;top:1px;font-size:9px;color:#fff;line-height:10px;font-weight:bold"><svg style="display:inline-block;vertical-align:-0.05em;overflow:visible" width="0.75em" height="0.75em" viewBox="0 0 10 10"><path d="M2.5,5 A3.2,3.2 0 1 1 5,8.5" stroke="currentColor" stroke-width="1.6" fill="none"/><path d="M0,3.5 L5,3.5 L2.5,7 Z" fill="currentColor"/></svg></div>
<div class="a" style="left:42px;top:2px;font-size:6px;color:#cfe3d6;line-height:7px"><svg style="display:inline-block;vertical-align:0.05em;overflow:visible" width="0.6em" height="0.6em" viewBox="0 0 10 10"><path d="M1.5,3 L8.5,3 L5,7.5 Z" fill="currentColor"/></svg></div>
<div class="a" style="left:52px;top:1px;font-size:9px;color:#5b9a74;line-height:10px"><svg style="display:inline-block;vertical-align:-0.05em;overflow:visible" width="0.75em" height="0.75em" viewBox="0 0 10 10"><path d="M7.5,5 A3.2,3.2 0 1 0 5,8.5" stroke="currentColor" stroke-width="1.4" fill="none"/><path d="M10,3.5 L5,3.5 L7.5,7 Z" fill="currentColor"/></svg></div>
<div class="a" style="left:74px;top:3px;width:8px;height:6px;background:#fff;border-radius:1px;opacity:.9"></div>
<div class="a" style="left:100px;top:1.5px;font-size:6px;color:#cfe3d6;line-height:7px"><svg style="display:inline-block;vertical-align:0.05em;overflow:visible" width="0.6em" height="0.6em" viewBox="0 0 10 10"><path d="M1.5,3 L8.5,3 L5,7.5 Z" fill="currentColor"/></svg></div>
<div class="a" style="left:674.5px;top:3.5px;width:7px;height:5px;border:1px solid #e8f0ea;background:#2d7d50"></div>
<div class="a" style="left:677px;top:4.5px;width:2px;height:3px;background:#e8f0ea"></div>
<div class="a" style="left:698px;top:6.5px;width:5.5px;height:1.1px;background:#fff"></div>
<div class="a" style="left:721.5px;top:3px;width:4.5px;height:4px;border:1px solid #fff"></div>
<div class="a" style="left:720px;top:4.5px;width:4.5px;height:4px;border:1px solid #fff;background:#217346"></div>
<div class="a" style="left:740px;top:0.5px;font-size:8px;color:#fff;line-height:10px;font-weight:bold"><svg style="display:inline-block;vertical-align:0;overflow:visible" width="0.7em" height="0.7em" viewBox="0 0 10 10"><path d="M1.5,1.5 L8.5,8.5 M8.5,1.5 L1.5,8.5" stroke="currentColor" stroke-width="1.3" fill="none"/></svg></div>
<div class="a" style="left:724px;top:14px;width:25px;height:12px;background:#1a5e38"></div>
<div class="a" style="left:727.5px;top:16px;width:3.5px;height:3.5px;border:1px solid #fff;border-radius:50%"></div>
<div class="a" style="left:726.2px;top:20px;width:6px;height:4px;border:1px solid #fff;border-bottom:none;border-radius:3px 3px 0 0"></div>
<div class="a" style="left:735px;top:15.5px;font-size:6.2px;color:#fff;line-height:8px">공유</div>
<div class="a" style="left:30px;top:14px;width:16.5px;height:12px;background:#f3f3f3"></div>
<div class="a" style="left:8.5px;top:15.8px;font-size:6.2px;color:#eaf3ed;line-height:8px">파일</div>
<div class="a" style="left:36px;top:15.8px;font-size:6.2px;color:#217346;line-height:8px">홈</div>
<div class="a" style="left:53px;top:15.8px;font-size:6.2px;color:#eaf3ed;line-height:8px">삽입</div>
<div class="a" style="left:75px;top:15.8px;font-size:6.2px;color:#eaf3ed;line-height:8px">페이지 레이아웃</div>
<div class="a" style="left:130px;top:15.8px;font-size:6.2px;color:#eaf3ed;line-height:8px">수식</div>
<div class="a" style="left:154px;top:15.8px;font-size:6.2px;color:#eaf3ed;line-height:8px">데이터</div>
<div class="a" style="left:183.5px;top:15.8px;font-size:6.2px;color:#eaf3ed;line-height:8px">검토</div>
<div class="a" style="left:206px;top:15.8px;font-size:6.2px;color:#eaf3ed;line-height:8px">보기</div>
<div class="a" style="left:229px;top:15.8px;font-size:6.1px;color:#b9d6c3;line-height:8px"><svg style="display:inline-block;vertical-align:-0.05em;overflow:visible" width="0.75em" height="0.75em" viewBox="0 0 10 10"><circle cx="5" cy="4" r="3" fill="none" stroke="currentColor" stroke-width="1"/><path d="M4,7.5 L6,7.5 M4.3,9 L5.7,9" stroke="currentColor" stroke-width="1"/></svg> 수행할 작업을 알려 주세요.</div>
<div class="a" style="left:0px;top:26px;width:749px;height:44px;background:#f3f3f3"></div>
<div class="a" style="left:0px;top:69.5px;width:749px;height:1px;background:#dadada"></div>
<div class="a" style="left:66px;top:29px;width:0.8px;height:39px;background:#dcdcdc"></div>
<div class="a" style="left:178.6px;top:29px;width:0.8px;height:39px;background:#dcdcdc"></div>
<div class="a" style="left:317.3px;top:29px;width:0.8px;height:39px;background:#dcdcdc"></div>
<div class="a" style="left:379.5px;top:29px;width:0.8px;height:39px;background:#dcdcdc"></div>
<div class="a" style="left:587.8px;top:29px;width:0.8px;height:39px;background:#dcdcdc"></div>
<div class="a" style="left:650px;top:29px;width:0.8px;height:39px;background:#dcdcdc"></div>
<div class="a" style="left:19px;top:63px;font-size:6.1px;color:#777;line-height:7px">클립보드</div>
<div class="a" style="left:114px;top:63px;font-size:6.1px;color:#777;line-height:7px">글꼴</div>
<div class="a" style="left:238.6px;top:63px;font-size:6.1px;color:#777;line-height:7px">맞춤</div>
<div class="a" style="left:332px;top:63px;font-size:6.1px;color:#777;line-height:7px">표시 형식</div>
<div class="a" style="left:475px;top:63px;font-size:6.1px;color:#777;line-height:7px">스타일</div>
<div class="a" style="left:616px;top:63px;font-size:6.1px;color:#777;line-height:7px">셀</div>
<div class="a" style="left:690px;top:63px;font-size:6.1px;color:#777;line-height:7px">편집</div>
<div class="a" style="left:61px;top:64px;font-size:4.5px;color:#999;line-height:6px"><svg style="display:inline-block;vertical-align:-0.05em;overflow:visible" width="0.75em" height="0.75em" viewBox="0 0 10 10"><path d="M2,2 L8,8 M8,4 L8,8 L4,8" stroke="currentColor" stroke-width="1" fill="none"/></svg></div>
<div class="a" style="left:173.5px;top:64px;font-size:4.5px;color:#999;line-height:6px"><svg style="display:inline-block;vertical-align:-0.05em;overflow:visible" width="0.75em" height="0.75em" viewBox="0 0 10 10"><path d="M2,2 L8,8 M8,4 L8,8 L4,8" stroke="currentColor" stroke-width="1" fill="none"/></svg></div>
<div class="a" style="left:312px;top:64px;font-size:4.5px;color:#999;line-height:6px"><svg style="display:inline-block;vertical-align:-0.05em;overflow:visible" width="0.75em" height="0.75em" viewBox="0 0 10 10"><path d="M2,2 L8,8 M8,4 L8,8 L4,8" stroke="currentColor" stroke-width="1" fill="none"/></svg></div>
<div class="a" style="left:374.5px;top:64px;font-size:4.5px;color:#999;line-height:6px"><svg style="display:inline-block;vertical-align:-0.05em;overflow:visible" width="0.75em" height="0.75em" viewBox="0 0 10 10"><path d="M2,2 L8,8 M8,4 L8,8 L4,8" stroke="currentColor" stroke-width="1" fill="none"/></svg></div>
<div class="a" style="left:8px;top:29.5px;width:9px;height:5px;background:#d0d0d0;border-radius:2px 2px 0 0"></div>
<div class="a" style="left:6px;top:33px;width:13px;height:11px;background:#dedede;border-radius:1px"></div>
<div class="a" style="left:12px;top:37px;width:7px;height:8px;background:#fff;border:1px solid #c4c4c4"></div>
<div class="a" style="left:2px;top:46px;font-size:6px;color:#9a9a9a;line-height:7px">붙여넣기</div>
<div class="a" style="left:29px;top:28.5px;font-size:6.2px;color:#444;line-height:8px"><svg style="display:inline-block;vertical-align:-0.05em;overflow:visible" width="0.75em" height="0.75em" viewBox="0 0 10 10"><path d="M2,1 L7,7 M8,1 L3,7" stroke="#555" stroke-width="1" fill="none"/><circle cx="2.5" cy="8" r="1.5" fill="none" stroke="#2f6fc4" stroke-width="1"/><circle cx="7.5" cy="8" r="1.5" fill="none" stroke="#2f6fc4" stroke-width="1"/></svg> 잘라내기</div>
<div class="a" style="left:29px;top:38.5px;font-size:6.2px;color:#444;line-height:8px"><svg style="display:inline-block;vertical-align:-0.05em;overflow:visible" width="0.75em" height="0.75em" viewBox="0 0 10 10"><rect x="1" y="1" width="6" height="6" fill="none" stroke="#666" stroke-width="1"/><rect x="3" y="3" width="6" height="6" fill="#f3f3f3" stroke="#666" stroke-width="1"/></svg> 복사 <svg style="display:inline-block;vertical-align:0.05em;overflow:visible" width="0.6em" height="0.6em" viewBox="0 0 10 10"><path d="M1.5,3 L8.5,3 L5,7.5 Z" fill="currentColor"/></svg></div>
<div class="a" style="left:30px;top:49px;font-size:6.2px;color:#444;line-height:8px"><svg style="display:inline-block;vertical-align:-0.05em;overflow:visible" width="0.75em" height="0.75em" viewBox="0 0 10 10"><path d="M2,8 L6,4" stroke="#d9a020" stroke-width="2"/><path d="M6,4 L8.5,1.5" stroke="#444" stroke-width="1.6"/></svg> 서식 복사</div>
<div class="a" style="left:69.7px;top:32px;width:66px;height:10px;background:#fff;border:1px solid #dadada"></div>
<div class="a" style="left:71px;top:32.5px;font-size:6.2px;color:#444;line-height:8px">맑은 고딕</div>
<div class="a" style="left:131px;top:32.5px;font-size:5px;color:#666;line-height:8px"><svg style="display:inline-block;vertical-align:0.05em;overflow:visible" width="0.6em" height="0.6em" viewBox="0 0 10 10"><path d="M1.5,3 L8.5,3 L5,7.5 Z" fill="currentColor"/></svg></div>
<div class="a" style="left:136.6px;top:32px;width:19.6px;height:10px;background:#fff;border:1px solid #dadada"></div>
<div class="a" style="left:138px;top:32.5px;font-size:6.2px;color:#444;line-height:8px">11</div>
<div class="a" style="left:152px;top:32.5px;font-size:5px;color:#666;line-height:8px"><svg style="display:inline-block;vertical-align:0.05em;overflow:visible" width="0.6em" height="0.6em" viewBox="0 0 10 10"><path d="M1.5,3 L8.5,3 L5,7.5 Z" fill="currentColor"/></svg></div>
<div class="a" style="left:159px;top:32.5px;font-size:6.3px;color:#555;line-height:8px">가&nbsp; 가</div>
<div class="a" style="left:71px;top:46.5px;font-size:6.3px;color:#555;line-height:8px">가</div>
<div class="a" style="left:81px;top:46.5px;font-size:6.3px;color:#555;line-height:8px">가</div>
<div class="a" style="left:91px;top:46.5px;font-size:6.3px;color:#555;line-height:8px">가</div>
<div class="a" style="left:101px;top:46.5px;font-size:6.3px;color:#555;line-height:8px"><svg style="display:inline-block;vertical-align:0.05em;overflow:visible" width="0.6em" height="0.6em" viewBox="0 0 10 10"><path d="M1.5,3 L8.5,3 L5,7.5 Z" fill="currentColor"/></svg></div>
<div class="a" style="left:110px;top:46.5px;font-size:6.3px;color:#555;line-height:8px"><svg style="display:inline-block;vertical-align:-0.05em;overflow:visible" width="0.75em" height="0.75em" viewBox="0 0 10 10"><rect x="1" y="1" width="8" height="8" fill="none" stroke="currentColor" stroke-width="1"/><path d="M5,1 L5,9 M1,5 L9,5" stroke="currentColor" stroke-width=".8"/></svg></div>
<div class="a" style="left:120px;top:46.5px;font-size:6.3px;color:#555;line-height:8px"><svg style="display:inline-block;vertical-align:0.05em;overflow:visible" width="0.6em" height="0.6em" viewBox="0 0 10 10"><path d="M1.5,3 L8.5,3 L5,7.5 Z" fill="currentColor"/></svg></div>
<div class="a" style="left:129px;top:46.5px;font-size:6.3px;color:#555;line-height:8px"><svg style="display:inline-block;vertical-align:-0.05em;overflow:visible" width="0.75em" height="0.75em" viewBox="0 0 10 10"><path d="M5,1.5 L9,8.5 L1,8.5 Z" fill="none" stroke="#2f6fc4" stroke-width="1.1"/></svg></div>
<div class="a" style="left:138px;top:46.5px;font-size:6.3px;color:#555;line-height:8px"><svg style="display:inline-block;vertical-align:0.05em;overflow:visible" width="0.6em" height="0.6em" viewBox="0 0 10 10"><path d="M1.5,3 L8.5,3 L5,7.5 Z" fill="currentColor"/></svg></div>
<div class="a" style="left:145px;top:46.5px;font-size:6.3px;color:#555;line-height:8px">가</div>
<div class="a" style="left:154px;top:46.5px;font-size:6.3px;color:#555;line-height:8px"><svg style="display:inline-block;vertical-align:0.05em;overflow:visible" width="0.6em" height="0.6em" viewBox="0 0 10 10"><path d="M1.5,3 L8.5,3 L5,7.5 Z" fill="currentColor"/></svg></div>
<div class="a" style="left:163px;top:46.5px;font-size:6.3px;color:#555;line-height:8px"><svg style="display:inline-block;vertical-align:-0.05em;overflow:visible" width="0.75em" height="0.75em" viewBox="0 0 10 10"><rect x="1" y="1" width="8" height="8" fill="none" stroke="currentColor" stroke-width="1"/><path d="M1,4 L9,4 M1,6.5 L9,6.5" stroke="currentColor" stroke-width=".8"/></svg></div>
<div class="a" style="left:172px;top:46.5px;font-size:6.3px;color:#555;line-height:8px"><svg style="display:inline-block;vertical-align:0.05em;overflow:visible" width="0.6em" height="0.6em" viewBox="0 0 10 10"><path d="M1.5,3 L8.5,3 L5,7.5 Z" fill="currentColor"/></svg></div>
<div class="a" style="left:144.4px;top:53.3px;width:8px;height:1.5px;background:#e00"></div>
<div class="a" style="left:191px;top:31px;width:10.5px;height:10px;background:#c8c8c8"></div>
<div class="a" style="left:182px;top:31.5px;font-size:6.6px;color:#777;line-height:9px">&#x2550;</div>
<div class="a" style="left:192.5px;top:31.5px;font-size:6.6px;color:#777;line-height:9px">&#x2550;</div>
<div class="a" style="left:203px;top:31.5px;font-size:6.6px;color:#777;line-height:9px">&#x2550;</div>
<div class="a" style="left:216px;top:31.5px;font-size:6.6px;color:#777;line-height:9px"><svg style="display:inline-block;vertical-align:-0.05em;overflow:visible" width="0.75em" height="0.75em" viewBox="0 0 10 10"><path d="M1,8 L9,2 M6,2 L9,2 L9,5" stroke="currentColor" stroke-width="1.1" fill="none"/></svg></div>
<div class="a" style="left:224px;top:31.5px;font-size:6.6px;color:#777;line-height:9px"><svg style="display:inline-block;vertical-align:0.05em;overflow:visible" width="0.6em" height="0.6em" viewBox="0 0 10 10"><path d="M1.5,3 L8.5,3 L5,7.5 Z" fill="currentColor"/></svg></div>
<div class="a" style="left:182px;top:46px;font-size:6.6px;color:#888;line-height:9px">&#x2261;</div>
<div class="a" style="left:192.5px;top:46px;font-size:6.6px;color:#888;line-height:9px">&#x2261;</div>
<div class="a" style="left:203px;top:46px;font-size:6.6px;color:#888;line-height:9px">&#x2261;</div>
<div class="a" style="left:216px;top:46px;font-size:6.6px;color:#888;line-height:9px"><svg style="display:inline-block;vertical-align:-0.05em;overflow:visible" width="0.75em" height="0.75em" viewBox="0 0 10 10"><path d="M1.5,1.5 L1.5,8.5 M2,5 L9,5 M5,2.5 L2,5 L5,7.5" stroke="#2f6fc4" stroke-width="1" fill="none"/></svg></div>
<div class="a" style="left:225px;top:46px;font-size:6.6px;color:#888;line-height:9px"><svg style="display:inline-block;vertical-align:-0.05em;overflow:visible" width="0.75em" height="0.75em" viewBox="0 0 10 10"><path d="M8.5,1.5 L8.5,8.5 M1,5 L8,5 M5,2.5 L8,5 L5,7.5" stroke="#2f6fc4" stroke-width="1" fill="none"/></svg></div>
<div class="a" style="left:240px;top:29.5px;font-size:6.2px;color:#444;line-height:8px"><svg style="display:inline-block;vertical-align:-0.05em;overflow:visible" width="0.75em" height="0.75em" viewBox="0 0 10 10"><rect x="1" y="1" width="7" height="7" fill="none" stroke="#2f6fc4" stroke-width="1"/><path d="M3,4 L9,4 L9,7 L5,7" stroke="#444" stroke-width="1" fill="none"/></svg> 텍스트 줄 바꿈</div>
<div class="a" style="left:240px;top:44.5px;font-size:6.2px;color:#444;line-height:8px"><svg style="display:inline-block;vertical-align:-0.05em;overflow:visible" width="0.75em" height="0.75em" viewBox="0 0 10 10"><rect x="1" y="1" width="8" height="8" fill="none" stroke="currentColor" stroke-width="1"/><path d="M5,1 L5,9 M1,5 L9,5" stroke="currentColor" stroke-width=".8"/></svg> 병합하고 가운데 맞춤 <svg style="display:inline-block;vertical-align:0.05em;overflow:visible" width="0.6em" height="0.6em" viewBox="0 0 10 10"><path d="M1.5,3 L8.5,3 L5,7.5 Z" fill="currentColor"/></svg></div>
<div class="a" style="left:319px;top:30px;width:58px;height:10px;background:#fff;border:1px solid #dadada"></div>
<div class="a" style="left:321px;top:31px;font-size:6.2px;color:#444;line-height:8px">일반</div>
<div class="a" style="left:320px;top:44.5px;font-size:6.4px;color:#555;line-height:8px"><svg style="display:inline-block;vertical-align:-0.05em;overflow:visible" width="0.75em" height="0.75em" viewBox="0 0 10 10"><rect x="1" y="2" width="8" height="6" fill="#5a8fd0" stroke="#2f5f9a" stroke-width=".8"/><rect x="4" y="5" width="4" height="4" fill="#f0c040"/></svg> <svg style="display:inline-block;vertical-align:0.05em;overflow:visible" width="0.6em" height="0.6em" viewBox="0 0 10 10"><path d="M1.5,3 L8.5,3 L5,7.5 Z" fill="currentColor"/></svg> % , &nbsp;&#x2192; &#x2190;</div>
<div class="a" style="left:384px;top:29px;width:12px;height:12px;background:linear-gradient(90deg,#d05050 0 30%,#5b8fd0 30% 60%,#fff 60%);border:1px solid #aaa"></div>
<div class="a" style="left:404px;top:29px;width:12px;height:12px;background:#fff;border:1px solid #6a8fc8"></div>
<div class="a" style="left:382px;top:43.5px;font-size:6.2px;color:#444;line-height:8px">조건부</div>
<div class="a" style="left:382px;top:51.5px;font-size:6.2px;color:#444;line-height:8px">서식 <svg style="display:inline-block;vertical-align:0.05em;overflow:visible" width="0.6em" height="0.6em" viewBox="0 0 10 10"><path d="M1.5,3 L8.5,3 L5,7.5 Z" fill="currentColor"/></svg></div>
<div class="a" style="left:407px;top:43.5px;font-size:6.2px;color:#444;line-height:8px">표</div>
<div class="a" style="left:403px;top:51.5px;font-size:6.2px;color:#444;line-height:8px">서식 <svg style="display:inline-block;vertical-align:0.05em;overflow:visible" width="0.6em" height="0.6em" viewBox="0 0 10 10"><path d="M1.5,3 L8.5,3 L5,7.5 Z" fill="currentColor"/></svg></div>
<div class="a" style="left:421.5px;top:28px;width:163.5px;height:30.5px;background:#fff;border:1px solid #dadada"></div>
<div class="a" style="left:423px;top:30px;width:49px;height:12.5px;background:#fff;border:1px solid #9a9a9a"></div>
<div class="a" style="left:426px;top:31.5px;font-size:6.8px;color:#222;line-height:9px">표준</div>
<div class="a" style="left:475px;top:30.5px;width:48.5px;height:12px;background:#ffc7ce"></div>
<div class="a" style="left:477px;top:31.5px;font-size:6.8px;color:#9c0006;line-height:9px">나쁨</div>
<div class="a" style="left:526px;top:30.5px;width:49px;height:12px;background:#ffeb9c"></div>
<div class="a" style="left:528px;top:31.5px;font-size:6.8px;color:#9c5700;line-height:9px">보통</div>
<div class="a" style="left:423px;top:44.3px;width:49px;height:10px;background:#c6efce"></div>
<div class="a" style="left:426px;top:44.5px;font-size:6.8px;color:#006100;line-height:9px">좋음</div>
<div class="a" style="left:477px;top:44.5px;font-size:6.8px;color:#e02020;line-height:9px">경고문</div>
<div class="a" style="left:526px;top:44px;width:49px;height:11px;background:#f2f2f2;border:1px solid #7f7f7f"></div>
<div class="a" style="left:528px;top:44.5px;font-size:6.8px;color:#fa7d00;line-height:9px">계산</div>
<div class="a" style="left:576px;top:29px;width:8px;height:29px;background:#f0f0f0"></div>
<div class="a" style="left:594.7px;top:29px;width:12px;height:12px;background:#fff;border:1px solid #8aa7c0"></div>
<div class="a" style="left:593.7px;top:43.5px;font-size:6.2px;color:#444;line-height:8px">삽입</div>
<div class="a" style="left:597.7px;top:51.5px;font-size:5px;color:#666;line-height:8px"><svg style="display:inline-block;vertical-align:0.05em;overflow:visible" width="0.6em" height="0.6em" viewBox="0 0 10 10"><path d="M1.5,3 L8.5,3 L5,7.5 Z" fill="currentColor"/></svg></div>
<div class="a" style="left:614px;top:29px;width:12px;height:12px;background:#fff;border:1px solid #8aa7c0"></div>
<div class="a" style="left:613px;top:43.5px;font-size:6.2px;color:#444;line-height:8px">삭제</div>
<div class="a" style="left:617px;top:51.5px;font-size:5px;color:#666;line-height:8px"><svg style="display:inline-block;vertical-align:0.05em;overflow:visible" width="0.6em" height="0.6em" viewBox="0 0 10 10"><path d="M1.5,3 L8.5,3 L5,7.5 Z" fill="currentColor"/></svg></div>
<div class="a" style="left:633px;top:29px;width:12px;height:12px;background:#fff;border:1px solid #8aa7c0"></div>
<div class="a" style="left:632px;top:43.5px;font-size:6.2px;color:#444;line-height:8px">서식</div>
<div class="a" style="left:636px;top:51.5px;font-size:5px;color:#666;line-height:8px"><svg style="display:inline-block;vertical-align:0.05em;overflow:visible" width="0.6em" height="0.6em" viewBox="0 0 10 10"><path d="M1.5,3 L8.5,3 L5,7.5 Z" fill="currentColor"/></svg></div>
<div class="a" style="left:592px;top:34px;width:8px;height:2px;background:#3a78c2"></div>
<div class="a" style="left:618px;top:28px;font-size:8px;color:#d23;line-height:10px"><svg style="display:inline-block;vertical-align:0;overflow:visible" width="0.7em" height="0.7em" viewBox="0 0 10 10"><path d="M1.5,1.5 L8.5,8.5 M8.5,1.5 L1.5,8.5" stroke="currentColor" stroke-width="1.3" fill="none"/></svg></div>
<div class="a" style="left:636px;top:33px;width:5px;height:5px;background:#3a78c2"></div>
<div class="a" style="left:653px;top:28.5px;font-size:6.2px;color:#444;line-height:8px">&#x3A3; 자동 합계 <svg style="display:inline-block;vertical-align:0.05em;overflow:visible" width="0.6em" height="0.6em" viewBox="0 0 10 10"><path d="M1.5,3 L8.5,3 L5,7.5 Z" fill="currentColor"/></svg></div>
<div class="a" style="left:653px;top:38.5px;font-size:6.2px;color:#444;line-height:8px"><svg style="display:inline-block;vertical-align:-0.05em;overflow:visible" width="0.75em" height="0.75em" viewBox="0 0 10 10"><rect x="1" y="1" width="8" height="8" fill="none" stroke="#666" stroke-width="1"/><path d="M5,2 L5,7.5 M3,5.5 L5,7.5 L7,5.5" stroke="#2f6fc4" stroke-width="1.1" fill="none"/></svg> 채우기 <svg style="display:inline-block;vertical-align:0.05em;overflow:visible" width="0.6em" height="0.6em" viewBox="0 0 10 10"><path d="M1.5,3 L8.5,3 L5,7.5 Z" fill="currentColor"/></svg></div>
<div class="a" style="left:653px;top:49px;font-size:6.2px;color:#444;line-height:8px"><svg style="display:inline-block;vertical-align:-0.05em;overflow:visible" width="0.75em" height="0.75em" viewBox="0 0 10 10"><path d="M2,6 L6,2 L9,5 L5,9 Z" fill="#e05080"/></svg> 지우기 <svg style="display:inline-block;vertical-align:0.05em;overflow:visible" width="0.6em" height="0.6em" viewBox="0 0 10 10"><path d="M1.5,3 L8.5,3 L5,7.5 Z" fill="currentColor"/></svg></div>
<div class="a" style="left:700px;top:29px;font-size:8px;color:#777;line-height:9px"><svg style="display:inline-block;vertical-align:-0.05em;overflow:visible" width="0.75em" height="0.75em" viewBox="0 0 10 10"><path d="M1,2 L9,2 L5,8 Z" fill="currentColor"/></svg></div>
<div class="a" style="left:725px;top:29px;width:8px;height:8px;border:1.6px solid #2f6fc4;border-radius:50%"></div>
<div class="a" style="left:722.5px;top:36px;width:1.6px;height:5px;background:#2f6fc4;transform:rotate(40deg)"></div>
<div class="a" style="left:696px;top:43.5px;font-size:6.2px;color:#444;line-height:8px">정렬 및 찾기 및</div>
<div class="a" style="left:698px;top:51.5px;font-size:6.2px;color:#444;line-height:8px">필터 <svg style="display:inline-block;vertical-align:0.05em;overflow:visible" width="0.6em" height="0.6em" viewBox="0 0 10 10"><path d="M1.5,3 L8.5,3 L5,7.5 Z" fill="currentColor"/></svg> 선택 <svg style="display:inline-block;vertical-align:0.05em;overflow:visible" width="0.6em" height="0.6em" viewBox="0 0 10 10"><path d="M1.5,3 L8.5,3 L5,7.5 Z" fill="currentColor"/></svg></div>
<div class="a" style="left:0px;top:70.5px;width:749px;height:21.5px;background:#e8e8e8"></div>
<div class="a" style="left:3px;top:76.5px;width:49px;height:12.7px;background:#fff"></div>
<div class="a" style="left:6px;top:78.5px;font-size:7.4px;color:#666;line-height:9px">P12</div>
<div class="a" style="left:47px;top:78px;font-size:5px;color:#666;line-height:8px"><svg style="display:inline-block;vertical-align:0.05em;overflow:visible" width="0.6em" height="0.6em" viewBox="0 0 10 10"><path d="M1.5,3 L8.5,3 L5,7.5 Z" fill="currentColor"/></svg></div>
<div class="a" style="left:57px;top:78px;font-size:7px;color:#aaa;line-height:9px"><svg style="display:inline-block;vertical-align:-0.05em;overflow:visible" width="0.3em" height="0.75em" viewBox="0 0 4 10"><circle cx="2" cy="2" r=".7" fill="currentColor"/><circle cx="2" cy="5" r=".7" fill="currentColor"/><circle cx="2" cy="8" r=".7" fill="currentColor"/></svg></div>
<div class="a" style="left:68px;top:76.5px;width:48px;height:12.7px;background:#fff"></div>
<div class="a" style="left:71px;top:78px;font-size:7px;color:#999;line-height:9px"><svg style="display:inline-block;vertical-align:0;overflow:visible" width="0.7em" height="0.7em" viewBox="0 0 10 10"><path d="M1.5,1.5 L8.5,8.5 M8.5,1.5 L1.5,8.5" stroke="currentColor" stroke-width="1.3" fill="none"/></svg>  <svg style="display:inline-block;vertical-align:-0.05em;overflow:visible" width="0.75em" height="0.75em" viewBox="0 0 10 10"><path d="M1.5,5.5 L4,8 L9,2" stroke="currentColor" stroke-width="1.2" fill="none"/></svg>  <i>fx</i></div>
<div class="a" style="left:119px;top:76.5px;width:630px;height:12.7px;background:#fff"></div>
<div class="a" style="left:0px;top:92px;width:749px;height:10.6px;background:#e9e9e9"></div>
<div class="a" style="left:0px;top:102px;width:749px;height:0.8px;background:#d0d0d0"></div>
<div class="a" style="left:13.3px;top:93.5px;width:47.2px;font-size:6.4px;color:#555;line-height:8px;text-align:center">A</div>
<div class="a" style="left:60px;top:92px;width:0.8px;height:10.6px;background:#d4d4d4"></div>
<div class="a" style="left:60.5px;top:93.5px;width:94.3px;font-size:6.4px;color:#555;line-height:8px;text-align:center">B</div>
<div class="a" style="left:154.3px;top:92px;width:0.8px;height:10.6px;background:#d4d4d4"></div>
<div class="a" style="left:154.8px;top:93.5px;width:20.8px;font-size:6.4px;color:#555;line-height:8px;text-align:center">C</div>
<div class="a" style="left:175.1px;top:92px;width:0.8px;height:10.6px;background:#d4d4d4"></div>
<div class="a" style="left:175.6px;top:93.5px;width:39.2px;font-size:6.4px;color:#555;line-height:8px;text-align:center">D</div>
<div class="a" style="left:214.3px;top:92px;width:0.8px;height:10.6px;background:#d4d4d4"></div>
<div class="a" style="left:214.8px;top:93.5px;width:39.2px;font-size:6.4px;color:#555;line-height:8px;text-align:center">E</div>
<div class="a" style="left:253.5px;top:92px;width:0.8px;height:10.6px;background:#d4d4d4"></div>
<div class="a" style="left:254px;top:93.5px;width:39px;font-size:6.4px;color:#555;line-height:8px;text-align:center">F</div>
<div class="a" style="left:292.5px;top:92px;width:0.8px;height:10.6px;background:#d4d4d4"></div>
<div class="a" style="left:293px;top:93.5px;width:39.2px;font-size:6.4px;color:#555;line-height:8px;text-align:center">G</div>
<div class="a" style="left:331.7px;top:92px;width:0.8px;height:10.6px;background:#d4d4d4"></div>
<div class="a" style="left:332.2px;top:93.5px;width:16.1px;font-size:6.4px;color:#555;line-height:8px;text-align:center">H</div>
<div class="a" style="left:347.8px;top:92px;width:0.8px;height:10.6px;background:#d4d4d4"></div>
<div class="a" style="left:348.3px;top:93.5px;width:46.1px;font-size:6.4px;color:#555;line-height:8px;text-align:center">I</div>
<div class="a" style="left:393.9px;top:92px;width:0.8px;height:10.6px;background:#d4d4d4"></div>
<div class="a" style="left:394.4px;top:93.5px;width:91.1px;font-size:6.4px;color:#555;line-height:8px;text-align:center">J</div>
<div class="a" style="left:485px;top:92px;width:0.8px;height:10.6px;background:#d4d4d4"></div>
<div class="a" style="left:485.5px;top:93.5px;width:26.2px;font-size:6.4px;color:#555;line-height:8px;text-align:center">K</div>
<div class="a" style="left:511.2px;top:92px;width:0.8px;height:10.6px;background:#d4d4d4"></div>
<div class="a" style="left:511.7px;top:93.5px;width:33px;font-size:6.4px;color:#555;line-height:8px;text-align:center">L</div>
<div class="a" style="left:544.2px;top:92px;width:0.8px;height:10.6px;background:#d4d4d4"></div>
<div class="a" style="left:544.7px;top:93.5px;width:32.6px;font-size:6.4px;color:#555;line-height:8px;text-align:center">M</div>
<div class="a" style="left:576.8px;top:92px;width:0.8px;height:10.6px;background:#d4d4d4"></div>
<div class="a" style="left:577.3px;top:93.5px;width:32.9px;font-size:6.4px;color:#555;line-height:8px;text-align:center">N</div>
<div class="a" style="left:609.7px;top:92px;width:0.8px;height:10.6px;background:#d4d4d4"></div>
<div class="a" style="left:610.2px;top:93.5px;width:39.4px;font-size:6.4px;color:#555;line-height:8px;text-align:center">O</div>
<div class="a" style="left:649.1px;top:92px;width:0.8px;height:10.6px;background:#d4d4d4"></div>
<div class="a" style="left:649.6px;top:92px;width:30px;height:10.6px;background:#d2d2d2"></div>
<div class="a" style="left:649.6px;top:101.6px;width:30px;height:1.2px;background:#217346"></div>
<div class="a" style="left:649.6px;top:93.5px;width:30px;font-size:6.4px;color:#555;line-height:8px;text-align:center">P</div>
<div class="a" style="left:679.1px;top:92px;width:0.8px;height:10.6px;background:#d4d4d4"></div>
<div class="a" style="left:679.6px;top:93.5px;width:29.8px;font-size:6.4px;color:#555;line-height:8px;text-align:center">Q</div>
<div class="a" style="left:708.9px;top:92px;width:0.8px;height:10.6px;background:#d4d4d4"></div>
<div class="a" style="left:709.4px;top:93.5px;width:30.3px;font-size:6.4px;color:#555;line-height:8px;text-align:center">R</div>
<div class="a" style="left:739.2px;top:92px;width:0.8px;height:10.6px;background:#d4d4d4"></div>
<div class="a" style="left:0px;top:102.6px;width:13.3px;height:277.24px;background:#e9e9e9"></div>
<div class="a" style="left:13px;top:102.6px;width:0.8px;height:277.24px;background:#d0d0d0"></div>
<div class="a" style="left:13.3px;top:102.2px;width:735.7px;height:0.8px;background:#e0e0e0"></div>
<div class="a" style="left:0px;top:104px;width:13.3px;font-size:6.4px;color:#555;line-height:8px;text-align:center">1</div>
<div class="a" style="left:13.3px;top:112.03px;width:735.7px;height:0.8px;background:#e0e0e0"></div>
<div class="a" style="left:0px;top:113.83px;width:13.3px;font-size:6.4px;color:#555;line-height:8px;text-align:center">2</div>
<div class="a" style="left:13.3px;top:121.86px;width:735.7px;height:0.8px;background:#e0e0e0"></div>
<div class="a" style="left:0px;top:123.66px;width:13.3px;font-size:6.4px;color:#555;line-height:8px;text-align:center">3</div>
<div class="a" style="left:13.3px;top:131.69px;width:735.7px;height:0.8px;background:#e0e0e0"></div>
<div class="a" style="left:0px;top:133.49px;width:13.3px;font-size:6.4px;color:#555;line-height:8px;text-align:center">4</div>
<div class="a" style="left:13.3px;top:141.52px;width:735.7px;height:0.8px;background:#e0e0e0"></div>
<div class="a" style="left:0px;top:143.32px;width:13.3px;font-size:6.4px;color:#555;line-height:8px;text-align:center">5</div>
<div class="a" style="left:13.3px;top:151.35px;width:735.7px;height:0.8px;background:#e0e0e0"></div>
<div class="a" style="left:0px;top:153.15px;width:13.3px;font-size:6.4px;color:#555;line-height:8px;text-align:center">6</div>
<div class="a" style="left:13.3px;top:161.18px;width:735.7px;height:0.8px;background:#e0e0e0"></div>
<div class="a" style="left:0px;top:162.98px;width:13.3px;font-size:6.4px;color:#555;line-height:8px;text-align:center">7</div>
<div class="a" style="left:13.3px;top:171.01px;width:735.7px;height:0.8px;background:#e0e0e0"></div>
<div class="a" style="left:0px;top:172.81px;width:13.3px;font-size:6.4px;color:#555;line-height:8px;text-align:center">8</div>
<div class="a" style="left:13.3px;top:180.84px;width:735.7px;height:0.8px;background:#e0e0e0"></div>
<div class="a" style="left:0px;top:182.64px;width:13.3px;font-size:6.4px;color:#555;line-height:8px;text-align:center">9</div>
<div class="a" style="left:13.3px;top:190.67px;width:735.7px;height:0.8px;background:#e0e0e0"></div>
<div class="a" style="left:0px;top:192.47px;width:13.3px;font-size:6.4px;color:#555;line-height:8px;text-align:center">10</div>
<div class="a" style="left:13.3px;top:200.5px;width:735.7px;height:0.8px;background:#e0e0e0"></div>
<div class="a" style="left:0px;top:202.3px;width:13.3px;font-size:6.4px;color:#555;line-height:8px;text-align:center">11</div>
<div class="a" style="left:13.3px;top:210.33px;width:735.7px;height:0.8px;background:#e0e0e0"></div>
<div class="a" style="left:0px;top:210.73px;width:13.3px;height:9.83px;background:#d2d2d2"></div>
<div class="a" style="left:0px;top:212.13px;width:13.3px;font-size:6.4px;color:#555;line-height:8px;text-align:center">12</div>
<div class="a" style="left:13.3px;top:220.16px;width:735.7px;height:0.8px;background:#e0e0e0"></div>
<div class="a" style="left:0px;top:221.96px;width:13.3px;font-size:6.4px;color:#555;line-height:8px;text-align:center">13</div>
<div class="a" style="left:13.3px;top:229.99px;width:735.7px;height:0.8px;background:#e0e0e0"></div>
<div class="a" style="left:0px;top:231.79px;width:13.3px;font-size:6.4px;color:#555;line-height:8px;text-align:center">14</div>
<div class="a" style="left:13.3px;top:239.82px;width:735.7px;height:0.8px;background:#e0e0e0"></div>
<div class="a" style="left:0px;top:241.62px;width:13.3px;font-size:6.4px;color:#555;line-height:8px;text-align:center">15</div>
<div class="a" style="left:13.3px;top:249.65px;width:735.7px;height:0.8px;background:#e0e0e0"></div>
<div class="a" style="left:0px;top:251.45px;width:13.3px;font-size:6.4px;color:#555;line-height:8px;text-align:center">16</div>
<div class="a" style="left:13.3px;top:259.48px;width:735.7px;height:0.8px;background:#e0e0e0"></div>
<div class="a" style="left:0px;top:261.28px;width:13.3px;font-size:6.4px;color:#555;line-height:8px;text-align:center">17</div>
<div class="a" style="left:13.3px;top:269.31px;width:735.7px;height:0.8px;background:#e0e0e0"></div>
<div class="a" style="left:0px;top:271.11px;width:13.3px;font-size:6.4px;color:#555;line-height:8px;text-align:center">18</div>
<div class="a" style="left:13.3px;top:279.14px;width:735.7px;height:0.8px;background:#e0e0e0"></div>
<div class="a" style="left:0px;top:280.94px;width:13.3px;font-size:6.4px;color:#555;line-height:8px;text-align:center">19</div>
<div class="a" style="left:13.3px;top:288.97px;width:735.7px;height:0.8px;background:#e0e0e0"></div>
<div class="a" style="left:0px;top:290.77px;width:13.3px;font-size:6.4px;color:#555;line-height:8px;text-align:center">20</div>
<div class="a" style="left:13.3px;top:298.8px;width:735.7px;height:0.8px;background:#e0e0e0"></div>
<div class="a" style="left:0px;top:300.6px;width:13.3px;font-size:6.4px;color:#555;line-height:8px;text-align:center">21</div>
<div class="a" style="left:13.3px;top:308.63px;width:735.7px;height:0.8px;background:#e0e0e0"></div>
<div class="a" style="left:0px;top:310.43px;width:13.3px;font-size:6.4px;color:#555;line-height:8px;text-align:center">22</div>
<div class="a" style="left:13.3px;top:318.46px;width:735.7px;height:0.8px;background:#e0e0e0"></div>
<div class="a" style="left:0px;top:320.26px;width:13.3px;font-size:6.4px;color:#555;line-height:8px;text-align:center">23</div>
<div class="a" style="left:13.3px;top:328.29px;width:735.7px;height:0.8px;background:#e0e0e0"></div>
<div class="a" style="left:0px;top:330.09px;width:13.3px;font-size:6.4px;color:#555;line-height:8px;text-align:center">24</div>
<div class="a" style="left:13.3px;top:338.12px;width:735.7px;height:0.8px;background:#e0e0e0"></div>
<div class="a" style="left:0px;top:339.92px;width:13.3px;font-size:6.4px;color:#555;line-height:8px;text-align:center">25</div>
<div class="a" style="left:13.3px;top:347.95px;width:735.7px;height:0.8px;background:#e0e0e0"></div>
<div class="a" style="left:0px;top:349.75px;width:13.3px;font-size:6.4px;color:#555;line-height:8px;text-align:center">26</div>
<div class="a" style="left:13.3px;top:357.78px;width:735.7px;height:0.8px;background:#e0e0e0"></div>
<div class="a" style="left:0px;top:359.58px;width:13.3px;font-size:6.4px;color:#555;line-height:8px;text-align:center">27</div>
<div class="a" style="left:13.3px;top:367.61px;width:735.7px;height:0.8px;background:#e0e0e0"></div>
<div class="a" style="left:0px;top:369.41px;width:13.3px;font-size:6.4px;color:#555;line-height:8px;text-align:center">28</div>
<div class="a" style="left:13.3px;top:377.44px;width:735.7px;height:0.8px;background:#e0e0e0"></div>
<div class="a" style="left:60.1px;top:102.6px;width:0.8px;height:276.24px;background:#e0e0e0"></div>
<div class="a" style="left:154.4px;top:102.6px;width:0.8px;height:276.24px;background:#e0e0e0"></div>
<div class="a" style="left:175.2px;top:102.6px;width:0.8px;height:276.24px;background:#e0e0e0"></div>
<div class="a" style="left:214.4px;top:102.6px;width:0.8px;height:276.24px;background:#e0e0e0"></div>
<div class="a" style="left:253.6px;top:102.6px;width:0.8px;height:276.24px;background:#e0e0e0"></div>
<div class="a" style="left:292.6px;top:102.6px;width:0.8px;height:276.24px;background:#e0e0e0"></div>
<div class="a" style="left:331.8px;top:102.6px;width:0.8px;height:276.24px;background:#e0e0e0"></div>
<div class="a" style="left:347.9px;top:102.6px;width:0.8px;height:276.24px;background:#e0e0e0"></div>
<div class="a" style="left:394px;top:102.6px;width:0.8px;height:276.24px;background:#e0e0e0"></div>
<div class="a" style="left:485.1px;top:102.6px;width:0.8px;height:276.24px;background:#e0e0e0"></div>
<div class="a" style="left:511.3px;top:102.6px;width:0.8px;height:276.24px;background:#e0e0e0"></div>
<div class="a" style="left:544.3px;top:102.6px;width:0.8px;height:276.24px;background:#e0e0e0"></div>
<div class="a" style="left:576.9px;top:102.6px;width:0.8px;height:276.24px;background:#e0e0e0"></div>
<div class="a" style="left:609.8px;top:102.6px;width:0.8px;height:276.24px;background:#e0e0e0"></div>
<div class="a" style="left:649.2px;top:102.6px;width:0.8px;height:276.24px;background:#e0e0e0"></div>
<div class="a" style="left:679.2px;top:102.6px;width:0.8px;height:276.24px;background:#e0e0e0"></div>
<div class="a" style="left:709px;top:102.6px;width:0.8px;height:276.24px;background:#e0e0e0"></div>
<div class="a" style="left:739.3px;top:102.6px;width:0.8px;height:276.24px;background:#e0e0e0"></div>
<div class="a" style="left:13.3px;top:102.6px;width:318.9px;height:9.83px;background:#acb9ca"></div>
<div class="a" style="left:348.3px;top:102.6px;width:301.3px;height:9.83px;background:#acb9ca"></div>
<div class="a xc" style="left:15px;top:103.5px;color:#2b2b2b">CATEGORY</div>
<div class="a xc" style="left:62.2px;top:103.5px;color:#2b2b2b">PART</div>
<div class="a xc xcc" style="left:154.8px;top:103.5px;width:20.8px;color:#2b2b2b"><span>QTY</span></div>
<div class="a xc xcc" style="left:175.6px;top:103.5px;width:39.2px;color:#2b2b2b"><span>X(mm)</span></div>
<div class="a xc xcc" style="left:214.8px;top:103.5px;width:39.2px;color:#2b2b2b"><span>Y(mm)</span></div>
<div class="a xc xcc" style="left:254px;top:103.5px;width:39px;color:#2b2b2b"><span>Z(mm)</span></div>
<div class="a xc xcc" style="left:293px;top:103.5px;width:39.2px;color:#2b2b2b"><span>MATERIAL</span></div>
<div class="a xc" style="left:15px;top:113.33px;color:#3a3a3a">PANEL</div>
<div class="a xc" style="left:62.2px;top:113.33px;color:#3a3a3a">BACK_PANEL_L</div>
<div class="a xc xcc" style="left:154.8px;top:113.33px;width:20.8px;color:#3a3a3a"><span>1</span></div>
<div class="a tri" style="left:155.3px;top:112.93px"></div>
<div class="a xc xcc" style="left:175.6px;top:113.33px;width:39.2px;color:#3a3a3a"><span>1771</span></div>
<div class="a tri" style="left:176.1px;top:112.93px"></div>
<div class="a xc xcc" style="left:214.8px;top:113.33px;width:39.2px;color:#3a3a3a"><span>12</span></div>
<div class="a tri" style="left:215.3px;top:112.93px"></div>
<div class="a xc xcc" style="left:254px;top:113.33px;width:39px;color:#3a3a3a"><span>2400</span></div>
<div class="a tri" style="left:254.5px;top:112.93px"></div>
<div class="a xc xcc" style="left:293px;top:113.33px;width:39.2px;color:#3a3a3a"><span>PANEL</span></div>
<div class="a xc" style="left:15px;top:123.16px;color:#3a3a3a">PANEL</div>
<div class="a xc" style="left:62.2px;top:123.16px;color:#3a3a3a">BACK_PANEL_R</div>
<div class="a xc xcc" style="left:154.8px;top:123.16px;width:20.8px;color:#3a3a3a"><span>1</span></div>
<div class="a tri" style="left:155.3px;top:122.76px"></div>
<div class="a xc xcc" style="left:175.6px;top:123.16px;width:39.2px;color:#3a3a3a"><span>629</span></div>
<div class="a tri" style="left:176.1px;top:122.76px"></div>
<div class="a xc xcc" style="left:214.8px;top:123.16px;width:39.2px;color:#3a3a3a"><span>12</span></div>
<div class="a tri" style="left:215.3px;top:122.76px"></div>
<div class="a xc xcc" style="left:254px;top:123.16px;width:39px;color:#3a3a3a"><span>2400</span></div>
<div class="a tri" style="left:254.5px;top:122.76px"></div>
<div class="a xc xcc" style="left:293px;top:123.16px;width:39.2px;color:#3a3a3a"><span>PANEL</span></div>
<div class="a xc" style="left:15px;top:132.99px;color:#3a3a3a">PANEL_SKIN</div>
<div class="a xc" style="left:62.2px;top:132.99px;color:#3a3a3a">SIDE_L__SKIN_A</div>
<div class="a xc xcc" style="left:154.8px;top:132.99px;width:20.8px;color:#3a3a3a"><span>1</span></div>
<div class="a tri" style="left:155.3px;top:132.59px"></div>
<div class="a xc xcc" style="left:175.6px;top:132.99px;width:39.2px;color:#3a3a3a"><span>9</span></div>
<div class="a tri" style="left:176.1px;top:132.59px"></div>
<div class="a xc xcc" style="left:214.8px;top:132.99px;width:39.2px;color:#3a3a3a"><span>588</span></div>
<div class="a tri" style="left:215.3px;top:132.59px"></div>
<div class="a xc xcc" style="left:254px;top:132.99px;width:39px;color:#3a3a3a"><span>2400</span></div>
<div class="a tri" style="left:254.5px;top:132.59px"></div>
<div class="a xc xcc" style="left:293px;top:132.99px;width:39.2px;color:#3a3a3a"><span>PANEL</span></div>
<div class="a xc" style="left:15px;top:142.82px;color:#3a3a3a">PANEL_SKIN</div>
<div class="a xc" style="left:62.2px;top:142.82px;color:#3a3a3a">SIDE_L__SKIN_B</div>
<div class="a xc xcc" style="left:154.8px;top:142.82px;width:20.8px;color:#3a3a3a"><span>1</span></div>
<div class="a tri" style="left:155.3px;top:142.42px"></div>
<div class="a xc xcc" style="left:175.6px;top:142.82px;width:39.2px;color:#3a3a3a"><span>9</span></div>
<div class="a tri" style="left:176.1px;top:142.42px"></div>
<div class="a xc xcc" style="left:214.8px;top:142.82px;width:39.2px;color:#3a3a3a"><span>588</span></div>
<div class="a tri" style="left:215.3px;top:142.42px"></div>
<div class="a xc xcc" style="left:254px;top:142.82px;width:39px;color:#3a3a3a"><span>2400</span></div>
<div class="a tri" style="left:254.5px;top:142.42px"></div>
<div class="a xc xcc" style="left:293px;top:142.82px;width:39.2px;color:#3a3a3a"><span>PANEL</span></div>
<div class="a xc" style="left:15px;top:152.65px;color:#3a3a3a">FRAME</div>
<div class="a xc" style="left:62.2px;top:152.65px;color:#3a3a3a">SIDE_L__PER_LONG</div>
<div class="a xc xcc" style="left:154.8px;top:152.65px;width:20.8px;color:#3a3a3a"><span>2</span></div>
<div class="a tri" style="left:155.3px;top:152.25px"></div>
<div class="a xc xcc" style="left:175.6px;top:152.65px;width:39.2px;color:#3a3a3a"><span>20</span></div>
<div class="a tri" style="left:176.1px;top:152.25px"></div>
<div class="a xc xcc" style="left:214.8px;top:152.65px;width:39.2px;color:#3a3a3a"><span>40</span></div>
<div class="a tri" style="left:215.3px;top:152.25px"></div>
<div class="a xc xcc" style="left:254px;top:152.65px;width:39px;color:#3a3a3a"><span>2400</span></div>
<div class="a tri" style="left:254.5px;top:152.25px"></div>
<div class="a xc xcc" style="left:293px;top:152.65px;width:39.2px;color:#3a3a3a"><span>FRAME</span></div>
<div class="a xc" style="left:15px;top:162.48px;color:#3a3a3a">FRAME</div>
<div class="a xc" style="left:62.2px;top:162.48px;color:#3a3a3a">SIDE_L__PER_SHORT</div>
<div class="a xc xcc" style="left:154.8px;top:162.48px;width:20.8px;color:#3a3a3a"><span>2</span></div>
<div class="a tri" style="left:155.3px;top:162.08px"></div>
<div class="a xc xcc" style="left:175.6px;top:162.48px;width:39.2px;color:#3a3a3a"><span>20</span></div>
<div class="a tri" style="left:176.1px;top:162.08px"></div>
<div class="a xc xcc" style="left:214.8px;top:162.48px;width:39.2px;color:#3a3a3a"><span>40</span></div>
<div class="a tri" style="left:215.3px;top:162.08px"></div>
<div class="a xc xcc" style="left:254px;top:162.48px;width:39px;color:#3a3a3a"><span>548</span></div>
<div class="a tri" style="left:254.5px;top:162.08px"></div>
<div class="a xc xcc" style="left:293px;top:162.48px;width:39.2px;color:#3a3a3a"><span>FRAME</span></div>
<div class="a xc" style="left:15px;top:172.31px;color:#3a3a3a">FRAME</div>
<div class="a xc" style="left:62.2px;top:172.31px;color:#3a3a3a">SIDE_L__RIB</div>
<div class="a xc xcc" style="left:154.8px;top:172.31px;width:20.8px;color:#3a3a3a"><span>13</span></div>
<div class="a tri" style="left:155.3px;top:171.91px"></div>
<div class="a xc xcc" style="left:175.6px;top:172.31px;width:39.2px;color:#3a3a3a"><span>20</span></div>
<div class="a tri" style="left:176.1px;top:171.91px"></div>
<div class="a xc xcc" style="left:214.8px;top:172.31px;width:39.2px;color:#3a3a3a"><span>40</span></div>
<div class="a tri" style="left:215.3px;top:171.91px"></div>
<div class="a xc xcc" style="left:254px;top:172.31px;width:39px;color:#3a3a3a"><span>548</span></div>
<div class="a tri" style="left:254.5px;top:171.91px"></div>
<div class="a xc xcc" style="left:293px;top:172.31px;width:39.2px;color:#3a3a3a"><span>FRAME</span></div>
<div class="a xc" style="left:15px;top:182.14px;color:#3a3a3a">PANEL_SKIN</div>
<div class="a xc" style="left:62.2px;top:182.14px;color:#3a3a3a">SIDE_R__SKIN_A</div>
<div class="a xc xcc" style="left:154.8px;top:182.14px;width:20.8px;color:#3a3a3a"><span>1</span></div>
<div class="a tri" style="left:155.3px;top:181.74px"></div>
<div class="a xc xcc" style="left:175.6px;top:182.14px;width:39.2px;color:#3a3a3a"><span>9</span></div>
<div class="a tri" style="left:176.1px;top:181.74px"></div>
<div class="a xc xcc" style="left:214.8px;top:182.14px;width:39.2px;color:#3a3a3a"><span>588</span></div>
<div class="a tri" style="left:215.3px;top:181.74px"></div>
<div class="a xc xcc" style="left:254px;top:182.14px;width:39px;color:#3a3a3a"><span>2400</span></div>
<div class="a tri" style="left:254.5px;top:181.74px"></div>
<div class="a xc xcc" style="left:293px;top:182.14px;width:39.2px;color:#3a3a3a"><span>PANEL</span></div>
<div class="a xc" style="left:15px;top:191.97px;color:#3a3a3a">PANEL_SKIN</div>
<div class="a xc" style="left:62.2px;top:191.97px;color:#3a3a3a">SIDE_R__SKIN_B</div>
<div class="a xc xcc" style="left:154.8px;top:191.97px;width:20.8px;color:#3a3a3a"><span>1</span></div>
<div class="a tri" style="left:155.3px;top:191.57px"></div>
<div class="a xc xcc" style="left:175.6px;top:191.97px;width:39.2px;color:#3a3a3a"><span>9</span></div>
<div class="a tri" style="left:176.1px;top:191.57px"></div>
<div class="a xc xcc" style="left:214.8px;top:191.97px;width:39.2px;color:#3a3a3a"><span>588</span></div>
<div class="a tri" style="left:215.3px;top:191.57px"></div>
<div class="a xc xcc" style="left:254px;top:191.97px;width:39px;color:#3a3a3a"><span>2400</span></div>
<div class="a tri" style="left:254.5px;top:191.57px"></div>
<div class="a xc xcc" style="left:293px;top:191.97px;width:39.2px;color:#3a3a3a"><span>PANEL</span></div>
<div class="a xc" style="left:15px;top:201.8px;color:#3a3a3a">FRAME</div>
<div class="a xc" style="left:62.2px;top:201.8px;color:#3a3a3a">SIDE_R__PER_LONG</div>
<div class="a xc xcc" style="left:154.8px;top:201.8px;width:20.8px;color:#3a3a3a"><span>2</span></div>
<div class="a tri" style="left:155.3px;top:201.4px"></div>
<div class="a xc xcc" style="left:175.6px;top:201.8px;width:39.2px;color:#3a3a3a"><span>20</span></div>
<div class="a tri" style="left:176.1px;top:201.4px"></div>
<div class="a xc xcc" style="left:214.8px;top:201.8px;width:39.2px;color:#3a3a3a"><span>40</span></div>
<div class="a tri" style="left:215.3px;top:201.4px"></div>
<div class="a xc xcc" style="left:254px;top:201.8px;width:39px;color:#3a3a3a"><span>2400</span></div>
<div class="a tri" style="left:254.5px;top:201.4px"></div>
<div class="a xc xcc" style="left:293px;top:201.8px;width:39.2px;color:#3a3a3a"><span>FRAME</span></div>
<div class="a xc" style="left:15px;top:211.63px;color:#3a3a3a">FRAME</div>
<div class="a xc" style="left:62.2px;top:211.63px;color:#3a3a3a">SIDE_R__PER_SHORT</div>
<div class="a xc xcc" style="left:154.8px;top:211.63px;width:20.8px;color:#3a3a3a"><span>2</span></div>
<div class="a tri" style="left:155.3px;top:211.23px"></div>
<div class="a xc xcc" style="left:175.6px;top:211.63px;width:39.2px;color:#3a3a3a"><span>20</span></div>
<div class="a tri" style="left:176.1px;top:211.23px"></div>
<div class="a xc xcc" style="left:214.8px;top:211.63px;width:39.2px;color:#3a3a3a"><span>40</span></div>
<div class="a tri" style="left:215.3px;top:211.23px"></div>
<div class="a xc xcc" style="left:254px;top:211.63px;width:39px;color:#3a3a3a"><span>548</span></div>
<div class="a tri" style="left:254.5px;top:211.23px"></div>
<div class="a xc xcc" style="left:293px;top:211.63px;width:39.2px;color:#3a3a3a"><span>FRAME</span></div>
<div class="a xc" style="left:15px;top:221.46px;color:#3a3a3a">FRAME</div>
<div class="a xc" style="left:62.2px;top:221.46px;color:#3a3a3a">SIDE_R__RIB</div>
<div class="a xc xcc" style="left:154.8px;top:221.46px;width:20.8px;color:#3a3a3a"><span>13</span></div>
<div class="a tri" style="left:155.3px;top:221.06px"></div>
<div class="a xc xcc" style="left:175.6px;top:221.46px;width:39.2px;color:#3a3a3a"><span>20</span></div>
<div class="a tri" style="left:176.1px;top:221.06px"></div>
<div class="a xc xcc" style="left:214.8px;top:221.46px;width:39.2px;color:#3a3a3a"><span>40</span></div>
<div class="a tri" style="left:215.3px;top:221.06px"></div>
<div class="a xc xcc" style="left:254px;top:221.46px;width:39px;color:#3a3a3a"><span>548</span></div>
<div class="a tri" style="left:254.5px;top:221.06px"></div>
<div class="a xc xcc" style="left:293px;top:221.46px;width:39.2px;color:#3a3a3a"><span>FRAME</span></div>
<div class="a xc" style="left:15px;top:231.29px;color:#3a3a3a">PANEL_SKIN</div>
<div class="a xc" style="left:62.2px;top:231.29px;color:#3a3a3a">TOP__SKIN_A</div>
<div class="a xc xcc" style="left:154.8px;top:231.29px;width:20.8px;color:#3a3a3a"><span>1</span></div>
<div class="a tri" style="left:155.3px;top:230.89px"></div>
<div class="a xc xcc" style="left:175.6px;top:231.29px;width:39.2px;color:#3a3a3a"><span>2284</span></div>
<div class="a tri" style="left:176.1px;top:230.89px"></div>
<div class="a xc xcc" style="left:214.8px;top:231.29px;width:39.2px;color:#3a3a3a"><span>588</span></div>
<div class="a tri" style="left:215.3px;top:230.89px"></div>
<div class="a xc xcc" style="left:254px;top:231.29px;width:39px;color:#3a3a3a"><span>9</span></div>
<div class="a tri" style="left:254.5px;top:230.89px"></div>
<div class="a xc xcc" style="left:293px;top:231.29px;width:39.2px;color:#3a3a3a"><span>PANEL</span></div>
<div class="a xc" style="left:15px;top:241.12px;color:#3a3a3a">PANEL_SKIN</div>
<div class="a xc" style="left:62.2px;top:241.12px;color:#3a3a3a">TOP__SKIN_B</div>
<div class="a xc xcc" style="left:154.8px;top:241.12px;width:20.8px;color:#3a3a3a"><span>1</span></div>
<div class="a tri" style="left:155.3px;top:240.72px"></div>
<div class="a xc xcc" style="left:175.6px;top:241.12px;width:39.2px;color:#3a3a3a"><span>2284</span></div>
<div class="a tri" style="left:176.1px;top:240.72px"></div>
<div class="a xc xcc" style="left:214.8px;top:241.12px;width:39.2px;color:#3a3a3a"><span>588</span></div>
<div class="a tri" style="left:215.3px;top:240.72px"></div>
<div class="a xc xcc" style="left:254px;top:241.12px;width:39px;color:#3a3a3a"><span>9</span></div>
<div class="a tri" style="left:254.5px;top:240.72px"></div>
<div class="a xc xcc" style="left:293px;top:241.12px;width:39.2px;color:#3a3a3a"><span>PANEL</span></div>
<div class="a xc" style="left:15px;top:250.95px;color:#3a3a3a">FRAME</div>
<div class="a xc" style="left:62.2px;top:250.95px;color:#3a3a3a">TOP__PER_LONG</div>
<div class="a xc xcc" style="left:154.8px;top:250.95px;width:20.8px;color:#3a3a3a"><span>2</span></div>
<div class="a tri" style="left:155.3px;top:250.55px"></div>
<div class="a xc xcc" style="left:175.6px;top:250.95px;width:39.2px;color:#3a3a3a"><span>20</span></div>
<div class="a tri" style="left:176.1px;top:250.55px"></div>
<div class="a xc xcc" style="left:214.8px;top:250.95px;width:39.2px;color:#3a3a3a"><span>40</span></div>
<div class="a tri" style="left:215.3px;top:250.55px"></div>
<div class="a xc xcc" style="left:254px;top:250.95px;width:39px;color:#3a3a3a"><span>2284</span></div>
<div class="a tri" style="left:254.5px;top:250.55px"></div>
<div class="a xc xcc" style="left:293px;top:250.95px;width:39.2px;color:#3a3a3a"><span>FRAME</span></div>
<div class="a xc" style="left:15px;top:260.78px;color:#3a3a3a">PANEL_SKIN</div>
<div class="a xc" style="left:62.2px;top:260.78px;color:#3a3a3a">BOTTOM_FLOOR__SKIN_A</div>
<div class="a xc xcc" style="left:154.8px;top:260.78px;width:20.8px;color:#3a3a3a"><span>1</span></div>
<div class="a tri" style="left:155.3px;top:260.38px"></div>
<div class="a xc xcc" style="left:175.6px;top:260.78px;width:39.2px;color:#3a3a3a"><span>2284</span></div>
<div class="a tri" style="left:176.1px;top:260.38px"></div>
<div class="a xc xcc" style="left:214.8px;top:260.78px;width:39.2px;color:#3a3a3a"><span>588</span></div>
<div class="a tri" style="left:215.3px;top:260.38px"></div>
<div class="a xc xcc" style="left:254px;top:260.78px;width:39px;color:#3a3a3a"><span>9</span></div>
<div class="a tri" style="left:254.5px;top:260.38px"></div>
<div class="a xc xcc" style="left:293px;top:260.78px;width:39.2px;color:#3a3a3a"><span>PANEL</span></div>
<div class="a xc" style="left:15px;top:270.61px;color:#3a3a3a">PANEL_SKIN</div>
<div class="a xc" style="left:62.2px;top:270.61px;color:#3a3a3a">BOTTOM_FLOOR__SKIN_B</div>
<div class="a xc xcc" style="left:154.8px;top:270.61px;width:20.8px;color:#3a3a3a"><span>1</span></div>
<div class="a tri" style="left:155.3px;top:270.21px"></div>
<div class="a xc xcc" style="left:175.6px;top:270.61px;width:39.2px;color:#3a3a3a"><span>2284</span></div>
<div class="a tri" style="left:176.1px;top:270.21px"></div>
<div class="a xc xcc" style="left:214.8px;top:270.61px;width:39.2px;color:#3a3a3a"><span>588</span></div>
<div class="a tri" style="left:215.3px;top:270.21px"></div>
<div class="a xc xcc" style="left:254px;top:270.61px;width:39px;color:#3a3a3a"><span>9</span></div>
<div class="a tri" style="left:254.5px;top:270.21px"></div>
<div class="a xc xcc" style="left:293px;top:270.61px;width:39.2px;color:#3a3a3a"><span>PANEL</span></div>
<div class="a xc" style="left:15px;top:280.44px;color:#3a3a3a">FRAME</div>
<div class="a xc" style="left:62.2px;top:280.44px;color:#3a3a3a">BOTTOM_FLOOR__PER_LONG</div>
<div class="a xc xcc" style="left:154.8px;top:280.44px;width:20.8px;color:#3a3a3a"><span>2</span></div>
<div class="a tri" style="left:155.3px;top:280.04px"></div>
<div class="a xc xcc" style="left:175.6px;top:280.44px;width:39.2px;color:#3a3a3a"><span>20</span></div>
<div class="a tri" style="left:176.1px;top:280.04px"></div>
<div class="a xc xcc" style="left:214.8px;top:280.44px;width:39.2px;color:#3a3a3a"><span>40</span></div>
<div class="a tri" style="left:215.3px;top:280.04px"></div>
<div class="a xc xcc" style="left:254px;top:280.44px;width:39px;color:#3a3a3a"><span>2284</span></div>
<div class="a tri" style="left:254.5px;top:280.04px"></div>
<div class="a xc xcc" style="left:293px;top:280.44px;width:39.2px;color:#3a3a3a"><span>FRAME</span></div>
<div class="a xc" style="left:15px;top:290.27px;color:#3a3a3a">FRAME</div>
<div class="a xc" style="left:62.2px;top:290.27px;color:#3a3a3a">BOTTOM_FLOOR__PER_SHORT</div>
<div class="a xc xcc" style="left:154.8px;top:290.27px;width:20.8px;color:#3a3a3a"><span>2</span></div>
<div class="a tri" style="left:155.3px;top:289.87px"></div>
<div class="a xc xcc" style="left:175.6px;top:290.27px;width:39.2px;color:#3a3a3a"><span>20</span></div>
<div class="a tri" style="left:176.1px;top:289.87px"></div>
<div class="a xc xcc" style="left:214.8px;top:290.27px;width:39.2px;color:#3a3a3a"><span>40</span></div>
<div class="a tri" style="left:215.3px;top:289.87px"></div>
<div class="a xc xcc" style="left:254px;top:290.27px;width:39px;color:#3a3a3a"><span>548</span></div>
<div class="a tri" style="left:254.5px;top:289.87px"></div>
<div class="a xc xcc" style="left:293px;top:290.27px;width:39.2px;color:#3a3a3a"><span>FRAME</span></div>
<div class="a xc" style="left:15px;top:300.1px;color:#3a3a3a">FRAME</div>
<div class="a xc" style="left:62.2px;top:300.1px;color:#3a3a3a">BOTTOM_FLOOR__RIB</div>
<div class="a xc xcc" style="left:154.8px;top:300.1px;width:20.8px;color:#3a3a3a"><span>9</span></div>
<div class="a tri" style="left:155.3px;top:299.7px"></div>
<div class="a xc xcc" style="left:175.6px;top:300.1px;width:39.2px;color:#3a3a3a"><span>20</span></div>
<div class="a tri" style="left:176.1px;top:299.7px"></div>
<div class="a xc xcc" style="left:214.8px;top:300.1px;width:39.2px;color:#3a3a3a"><span>40</span></div>
<div class="a tri" style="left:215.3px;top:299.7px"></div>
<div class="a xc xcc" style="left:254px;top:300.1px;width:39px;color:#3a3a3a"><span>548</span></div>
<div class="a tri" style="left:254.5px;top:299.7px"></div>
<div class="a xc xcc" style="left:293px;top:300.1px;width:39.2px;color:#3a3a3a"><span>FRAME</span></div>
<div class="a xc" style="left:15px;top:309.93px;color:#3a3a3a">PANEL_SKIN</div>
<div class="a xc" style="left:62.2px;top:309.93px;color:#3a3a3a">MID_SHELF__SKIN_A</div>
<div class="a xc xcc" style="left:154.8px;top:309.93px;width:20.8px;color:#3a3a3a"><span>1</span></div>
<div class="a tri" style="left:155.3px;top:309.53px"></div>
<div class="a xc xcc" style="left:175.6px;top:309.93px;width:39.2px;color:#3a3a3a"><span>2284</span></div>
<div class="a tri" style="left:176.1px;top:309.53px"></div>
<div class="a xc xcc" style="left:214.8px;top:309.93px;width:39.2px;color:#3a3a3a"><span>588</span></div>
<div class="a tri" style="left:215.3px;top:309.53px"></div>
<div class="a xc xcc" style="left:254px;top:309.93px;width:39px;color:#3a3a3a"><span>9</span></div>
<div class="a tri" style="left:254.5px;top:309.53px"></div>
<div class="a xc xcc" style="left:293px;top:309.93px;width:39.2px;color:#3a3a3a"><span>PANEL</span></div>
<div class="a xc" style="left:15px;top:319.76px;color:#3a3a3a">PANEL_SKIN</div>
<div class="a xc" style="left:62.2px;top:319.76px;color:#3a3a3a">MID_SHELF__SKIN_B</div>
<div class="a xc xcc" style="left:154.8px;top:319.76px;width:20.8px;color:#3a3a3a"><span>1</span></div>
<div class="a tri" style="left:155.3px;top:319.36px"></div>
<div class="a xc xcc" style="left:175.6px;top:319.76px;width:39.2px;color:#3a3a3a"><span>2284</span></div>
<div class="a tri" style="left:176.1px;top:319.36px"></div>
<div class="a xc xcc" style="left:214.8px;top:319.76px;width:39.2px;color:#3a3a3a"><span>588</span></div>
<div class="a tri" style="left:215.3px;top:319.36px"></div>
<div class="a xc xcc" style="left:254px;top:319.76px;width:39px;color:#3a3a3a"><span>9</span></div>
<div class="a tri" style="left:254.5px;top:319.36px"></div>
<div class="a xc xcc" style="left:293px;top:319.76px;width:39.2px;color:#3a3a3a"><span>PANEL</span></div>
<div class="a xc" style="left:15px;top:329.59px;color:#3a3a3a">FRAME</div>
<div class="a xc" style="left:62.2px;top:329.59px;color:#3a3a3a">MID_SHELF__PER_LONG</div>
<div class="a xc xcc" style="left:154.8px;top:329.59px;width:20.8px;color:#3a3a3a"><span>2</span></div>
<div class="a tri" style="left:155.3px;top:329.19px"></div>
<div class="a xc xcc" style="left:175.6px;top:329.59px;width:39.2px;color:#3a3a3a"><span>20</span></div>
<div class="a tri" style="left:176.1px;top:329.19px"></div>
<div class="a xc xcc" style="left:214.8px;top:329.59px;width:39.2px;color:#3a3a3a"><span>40</span></div>
<div class="a tri" style="left:215.3px;top:329.19px"></div>
<div class="a xc xcc" style="left:254px;top:329.59px;width:39px;color:#3a3a3a"><span>2284</span></div>
<div class="a tri" style="left:254.5px;top:329.19px"></div>
<div class="a xc xcc" style="left:293px;top:329.59px;width:39.2px;color:#3a3a3a"><span>FRAME</span></div>
<div class="a xc" style="left:15px;top:339.42px;color:#3a3a3a">FRAME</div>
<div class="a xc" style="left:62.2px;top:339.42px;color:#3a3a3a">MID_SHELF__PER_SHORT</div>
<div class="a xc xcc" style="left:154.8px;top:339.42px;width:20.8px;color:#3a3a3a"><span>2</span></div>
<div class="a tri" style="left:155.3px;top:339.02px"></div>
<div class="a xc xcc" style="left:175.6px;top:339.42px;width:39.2px;color:#3a3a3a"><span>20</span></div>
<div class="a tri" style="left:176.1px;top:339.02px"></div>
<div class="a xc xcc" style="left:214.8px;top:339.42px;width:39.2px;color:#3a3a3a"><span>40</span></div>
<div class="a tri" style="left:215.3px;top:339.02px"></div>
<div class="a xc xcc" style="left:254px;top:339.42px;width:39px;color:#3a3a3a"><span>548</span></div>
<div class="a tri" style="left:254.5px;top:339.02px"></div>
<div class="a xc xcc" style="left:293px;top:339.42px;width:39.2px;color:#3a3a3a"><span>FRAME</span></div>
<div class="a xc" style="left:15px;top:349.25px;color:#3a3a3a">FRAME</div>
<div class="a xc" style="left:62.2px;top:349.25px;color:#3a3a3a">MID_SHELF__RIB</div>
<div class="a xc xcc" style="left:154.8px;top:349.25px;width:20.8px;color:#3a3a3a"><span>9</span></div>
<div class="a tri" style="left:155.3px;top:348.85px"></div>
<div class="a xc xcc" style="left:175.6px;top:349.25px;width:39.2px;color:#3a3a3a"><span>20</span></div>
<div class="a tri" style="left:176.1px;top:348.85px"></div>
<div class="a xc xcc" style="left:214.8px;top:349.25px;width:39.2px;color:#3a3a3a"><span>40</span></div>
<div class="a tri" style="left:215.3px;top:348.85px"></div>
<div class="a xc xcc" style="left:254px;top:349.25px;width:39px;color:#3a3a3a"><span>548</span></div>
<div class="a tri" style="left:254.5px;top:348.85px"></div>
<div class="a xc xcc" style="left:293px;top:349.25px;width:39.2px;color:#3a3a3a"><span>FRAME</span></div>
<div class="a xc" style="left:15px;top:359.08px;color:#3a3a3a">PANEL_SKIN</div>
<div class="a xc" style="left:62.2px;top:359.08px;color:#3a3a3a">UPPER_SHELF__SKIN_A</div>
<div class="a xc xcc" style="left:154.8px;top:359.08px;width:20.8px;color:#3a3a3a"><span>1</span></div>
<div class="a tri" style="left:155.3px;top:358.68px"></div>
<div class="a xc xcc" style="left:175.6px;top:359.08px;width:39.2px;color:#3a3a3a"><span>2284</span></div>
<div class="a tri" style="left:176.1px;top:358.68px"></div>
<div class="a xc xcc" style="left:214.8px;top:359.08px;width:39.2px;color:#3a3a3a"><span>588</span></div>
<div class="a tri" style="left:215.3px;top:358.68px"></div>
<div class="a xc xcc" style="left:254px;top:359.08px;width:39px;color:#3a3a3a"><span>9</span></div>
<div class="a tri" style="left:254.5px;top:358.68px"></div>
<div class="a xc xcc" style="left:293px;top:359.08px;width:39.2px;color:#3a3a3a"><span>PANEL</span></div>
<div class="a xc" style="left:15px;top:368.91px;color:#3a3a3a">PANEL_SKIN</div>
<div class="a xc" style="left:62.2px;top:368.91px;color:#3a3a3a">UPPER_SHELF__SKIN_B</div>
<div class="a xc xcc" style="left:154.8px;top:368.91px;width:20.8px;color:#3a3a3a"><span>1</span></div>
<div class="a tri" style="left:155.3px;top:368.51px"></div>
<div class="a xc xcc" style="left:175.6px;top:368.91px;width:39.2px;color:#3a3a3a"><span>2284</span></div>
<div class="a tri" style="left:176.1px;top:368.51px"></div>
<div class="a xc xcc" style="left:214.8px;top:368.91px;width:39.2px;color:#3a3a3a"><span>588</span></div>
<div class="a tri" style="left:215.3px;top:368.51px"></div>
<div class="a xc xcc" style="left:254px;top:368.91px;width:39px;color:#3a3a3a"><span>9</span></div>
<div class="a tri" style="left:254.5px;top:368.51px"></div>
<div class="a xc xcc" style="left:293px;top:368.91px;width:39.2px;color:#3a3a3a"><span>PANEL</span></div>
<div class="a xc" style="left:350px;top:103.5px;color:#2b2b2b">CATEGORY</div>
<div class="a xc" style="left:396.1px;top:103.5px;color:#2b2b2b">PART</div>
<div class="a xc xcc" style="left:485.5px;top:103.5px;width:26.2px;color:#2b2b2b"><span>QTY</span></div>
<div class="a xc xcc" style="left:511.7px;top:103.5px;width:33px;color:#2b2b2b"><span>X(mm)</span></div>
<div class="a xc xcc" style="left:544.7px;top:103.5px;width:32.6px;color:#2b2b2b"><span>Y(mm)</span></div>
<div class="a xc xcc" style="left:577.3px;top:103.5px;width:32.9px;color:#2b2b2b"><span>Z(mm)</span></div>
<div class="a xc xcc" style="left:610.2px;top:103.5px;width:39.4px;color:#2b2b2b"><span>MATERIAL</span></div>
<div class="a xc" style="left:350px;top:113.33px;color:#3a3a3a">FRAME</div>
<div class="a xc" style="left:396.1px;top:113.33px;color:#3a3a3a">UPPER_SHELF__PER_LONG</div>
<div class="a xc xcc" style="left:485.5px;top:113.33px;width:26.2px;color:#3a3a3a"><span>2</span></div>
<div class="a tri" style="left:486px;top:112.93px"></div>
<div class="a xc xcc" style="left:511.7px;top:113.33px;width:33px;color:#3a3a3a"><span>20</span></div>
<div class="a tri" style="left:512.2px;top:112.93px"></div>
<div class="a xc xcc" style="left:544.7px;top:113.33px;width:32.6px;color:#3a3a3a"><span>40</span></div>
<div class="a tri" style="left:545.2px;top:112.93px"></div>
<div class="a xc xcc" style="left:577.3px;top:113.33px;width:32.9px;color:#3a3a3a"><span>2284</span></div>
<div class="a tri" style="left:577.8px;top:112.93px"></div>
<div class="a xc xcc" style="left:610.2px;top:113.33px;width:39.4px;color:#3a3a3a"><span>FRAME</span></div>
<div class="a xc" style="left:350px;top:123.16px;color:#3a3a3a">FRAME</div>
<div class="a xc" style="left:396.1px;top:123.16px;color:#3a3a3a">UPPER_SHELF__PER_SHORT</div>
<div class="a xc xcc" style="left:485.5px;top:123.16px;width:26.2px;color:#3a3a3a"><span>2</span></div>
<div class="a tri" style="left:486px;top:122.76px"></div>
<div class="a xc xcc" style="left:511.7px;top:123.16px;width:33px;color:#3a3a3a"><span>20</span></div>
<div class="a tri" style="left:512.2px;top:122.76px"></div>
<div class="a xc xcc" style="left:544.7px;top:123.16px;width:32.6px;color:#3a3a3a"><span>40</span></div>
<div class="a tri" style="left:545.2px;top:122.76px"></div>
<div class="a xc xcc" style="left:577.3px;top:123.16px;width:32.9px;color:#3a3a3a"><span>548</span></div>
<div class="a tri" style="left:577.8px;top:122.76px"></div>
<div class="a xc xcc" style="left:610.2px;top:123.16px;width:39.4px;color:#3a3a3a"><span>FRAME</span></div>
<div class="a xc" style="left:350px;top:132.99px;color:#3a3a3a">FRAME</div>
<div class="a xc" style="left:396.1px;top:132.99px;color:#3a3a3a">UPPER_SHELF__RIB</div>
<div class="a xc xcc" style="left:485.5px;top:132.99px;width:26.2px;color:#3a3a3a"><span>9</span></div>
<div class="a tri" style="left:486px;top:132.59px"></div>
<div class="a xc xcc" style="left:511.7px;top:132.99px;width:33px;color:#3a3a3a"><span>20</span></div>
<div class="a tri" style="left:512.2px;top:132.59px"></div>
<div class="a xc xcc" style="left:544.7px;top:132.99px;width:32.6px;color:#3a3a3a"><span>40</span></div>
<div class="a tri" style="left:545.2px;top:132.59px"></div>
<div class="a xc xcc" style="left:577.3px;top:132.99px;width:32.9px;color:#3a3a3a"><span>548</span></div>
<div class="a tri" style="left:577.8px;top:132.59px"></div>
<div class="a xc xcc" style="left:610.2px;top:132.99px;width:39.4px;color:#3a3a3a"><span>FRAME</span></div>
<div class="a xc" style="left:350px;top:142.82px;color:#3a3a3a">PANEL_SKIN</div>
<div class="a xc" style="left:396.1px;top:142.82px;color:#3a3a3a">PARTITION_0__SKIN_A</div>
<div class="a xc xcc" style="left:485.5px;top:142.82px;width:26.2px;color:#3a3a3a"><span>1</span></div>
<div class="a tri" style="left:486px;top:142.42px"></div>
<div class="a xc xcc" style="left:511.7px;top:142.82px;width:33px;color:#3a3a3a"><span>9</span></div>
<div class="a tri" style="left:512.2px;top:142.42px"></div>
<div class="a xc xcc" style="left:544.7px;top:142.82px;width:32.6px;color:#3a3a3a"><span>588</span></div>
<div class="a tri" style="left:545.2px;top:142.42px"></div>
<div class="a xc xcc" style="left:577.3px;top:142.82px;width:32.9px;color:#3a3a3a"><span>90</span></div>
<div class="a tri" style="left:577.8px;top:142.42px"></div>
<div class="a xc xcc" style="left:610.2px;top:142.82px;width:39.4px;color:#3a3a3a"><span>PANEL</span></div>
<div class="a xc" style="left:350px;top:152.65px;color:#3a3a3a">PANEL_SKIN</div>
<div class="a xc" style="left:396.1px;top:152.65px;color:#3a3a3a">PARTITION_0__SKIN_B</div>
<div class="a xc xcc" style="left:485.5px;top:152.65px;width:26.2px;color:#3a3a3a"><span>1</span></div>
<div class="a tri" style="left:486px;top:152.25px"></div>
<div class="a xc xcc" style="left:511.7px;top:152.65px;width:33px;color:#3a3a3a"><span>9</span></div>
<div class="a tri" style="left:512.2px;top:152.25px"></div>
<div class="a xc xcc" style="left:544.7px;top:152.65px;width:32.6px;color:#3a3a3a"><span>588</span></div>
<div class="a tri" style="left:545.2px;top:152.25px"></div>
<div class="a xc xcc" style="left:577.3px;top:152.65px;width:32.9px;color:#3a3a3a"><span>90</span></div>
<div class="a tri" style="left:577.8px;top:152.25px"></div>
<div class="a xc xcc" style="left:610.2px;top:152.65px;width:39.4px;color:#3a3a3a"><span>PANEL</span></div>
<div class="a xc" style="left:350px;top:162.48px;color:#3a3a3a">FRAME</div>
<div class="a xc" style="left:396.1px;top:162.48px;color:#3a3a3a">PARTITION_0__PER_LONG</div>
<div class="a xc xcc" style="left:485.5px;top:162.48px;width:26.2px;color:#3a3a3a"><span>2</span></div>
<div class="a tri" style="left:486px;top:162.08px"></div>
<div class="a xc xcc" style="left:511.7px;top:162.48px;width:33px;color:#3a3a3a"><span>20</span></div>
<div class="a tri" style="left:512.2px;top:162.08px"></div>
<div class="a xc xcc" style="left:544.7px;top:162.48px;width:32.6px;color:#3a3a3a"><span>40</span></div>
<div class="a tri" style="left:545.2px;top:162.08px"></div>
<div class="a xc xcc" style="left:577.3px;top:162.48px;width:32.9px;color:#3a3a3a"><span>588</span></div>
<div class="a tri" style="left:577.8px;top:162.08px"></div>
<div class="a xc xcc" style="left:610.2px;top:162.48px;width:39.4px;color:#3a3a3a"><span>FRAME</span></div>
<div class="a xc" style="left:350px;top:172.31px;color:#3a3a3a">FRAME</div>
<div class="a xc" style="left:396.1px;top:172.31px;color:#3a3a3a">PARTITION_0__PER_SHORT</div>
<div class="a xc xcc" style="left:485.5px;top:172.31px;width:26.2px;color:#3a3a3a"><span>2</span></div>
<div class="a tri" style="left:486px;top:171.91px"></div>
<div class="a xc xcc" style="left:511.7px;top:172.31px;width:33px;color:#3a3a3a"><span>20</span></div>
<div class="a tri" style="left:512.2px;top:171.91px"></div>
<div class="a xc xcc" style="left:544.7px;top:172.31px;width:32.6px;color:#3a3a3a"><span>40</span></div>
<div class="a tri" style="left:545.2px;top:171.91px"></div>
<div class="a xc xcc" style="left:577.3px;top:172.31px;width:32.9px;color:#3a3a3a"><span>50</span></div>
<div class="a tri" style="left:577.8px;top:171.91px"></div>
<div class="a xc xcc" style="left:610.2px;top:172.31px;width:39.4px;color:#3a3a3a"><span>FRAME</span></div>
<div class="a xc" style="left:350px;top:182.14px;color:#3a3a3a">FRAME</div>
<div class="a xc" style="left:396.1px;top:182.14px;color:#3a3a3a">PARTITION_0__RIB</div>
<div class="a xc xcc" style="left:485.5px;top:182.14px;width:26.2px;color:#3a3a3a"><span>4</span></div>
<div class="a tri" style="left:486px;top:181.74px"></div>
<div class="a xc xcc" style="left:511.7px;top:182.14px;width:33px;color:#3a3a3a"><span>20</span></div>
<div class="a tri" style="left:512.2px;top:181.74px"></div>
<div class="a xc xcc" style="left:544.7px;top:182.14px;width:32.6px;color:#3a3a3a"><span>40</span></div>
<div class="a tri" style="left:545.2px;top:181.74px"></div>
<div class="a xc xcc" style="left:577.3px;top:182.14px;width:32.9px;color:#3a3a3a"><span>50</span></div>
<div class="a tri" style="left:577.8px;top:181.74px"></div>
<div class="a xc xcc" style="left:610.2px;top:182.14px;width:39.4px;color:#3a3a3a"><span>FRAME</span></div>
<div class="a xc" style="left:350px;top:191.97px;color:#3a3a3a">PANEL_SKIN</div>
<div class="a xc" style="left:396.1px;top:191.97px;color:#3a3a3a">PARTITION_1__SKIN_A</div>
<div class="a xc xcc" style="left:485.5px;top:191.97px;width:26.2px;color:#3a3a3a"><span>1</span></div>
<div class="a tri" style="left:486px;top:191.57px"></div>
<div class="a xc xcc" style="left:511.7px;top:191.97px;width:33px;color:#3a3a3a"><span>9</span></div>
<div class="a tri" style="left:512.2px;top:191.57px"></div>
<div class="a xc xcc" style="left:544.7px;top:191.97px;width:32.6px;color:#3a3a3a"><span>588</span></div>
<div class="a tri" style="left:545.2px;top:191.57px"></div>
<div class="a xc xcc" style="left:577.3px;top:191.97px;width:32.9px;color:#3a3a3a"><span>244</span></div>
<div class="a tri" style="left:577.8px;top:191.57px"></div>
<div class="a xc xcc" style="left:610.2px;top:191.97px;width:39.4px;color:#3a3a3a"><span>PANEL</span></div>
<div class="a xc" style="left:350px;top:201.8px;color:#3a3a3a">PANEL_SKIN</div>
<div class="a xc" style="left:396.1px;top:201.8px;color:#3a3a3a">PARTITION_1__SKIN_B</div>
<div class="a xc xcc" style="left:485.5px;top:201.8px;width:26.2px;color:#3a3a3a"><span>1</span></div>
<div class="a tri" style="left:486px;top:201.4px"></div>
<div class="a xc xcc" style="left:511.7px;top:201.8px;width:33px;color:#3a3a3a"><span>9</span></div>
<div class="a tri" style="left:512.2px;top:201.4px"></div>
<div class="a xc xcc" style="left:544.7px;top:201.8px;width:32.6px;color:#3a3a3a"><span>588</span></div>
<div class="a tri" style="left:545.2px;top:201.4px"></div>
<div class="a xc xcc" style="left:577.3px;top:201.8px;width:32.9px;color:#3a3a3a"><span>244</span></div>
<div class="a tri" style="left:577.8px;top:201.4px"></div>
<div class="a xc xcc" style="left:610.2px;top:201.8px;width:39.4px;color:#3a3a3a"><span>PANEL</span></div>
<div class="a xc" style="left:350px;top:211.63px;color:#3a3a3a">FRAME</div>
<div class="a xc" style="left:396.1px;top:211.63px;color:#3a3a3a">PARTITION_1__PER_LONG</div>
<div class="a xc xcc" style="left:485.5px;top:211.63px;width:26.2px;color:#3a3a3a"><span>2</span></div>
<div class="a tri" style="left:486px;top:211.23px"></div>
<div class="a xc xcc" style="left:511.7px;top:211.63px;width:33px;color:#3a3a3a"><span>20</span></div>
<div class="a tri" style="left:512.2px;top:211.23px"></div>
<div class="a xc xcc" style="left:544.7px;top:211.63px;width:32.6px;color:#3a3a3a"><span>40</span></div>
<div class="a tri" style="left:545.2px;top:211.23px"></div>
<div class="a xc xcc" style="left:577.3px;top:211.63px;width:32.9px;color:#3a3a3a"><span>588</span></div>
<div class="a tri" style="left:577.8px;top:211.23px"></div>
<div class="a xc xcc" style="left:610.2px;top:211.63px;width:39.4px;color:#3a3a3a"><span>FRAME</span></div>
<div class="a xc" style="left:350px;top:221.46px;color:#3a3a3a">FRAME</div>
<div class="a xc" style="left:396.1px;top:221.46px;color:#3a3a3a">PARTITION_1__PER_SHORT</div>
<div class="a xc xcc" style="left:485.5px;top:221.46px;width:26.2px;color:#3a3a3a"><span>2</span></div>
<div class="a tri" style="left:486px;top:221.06px"></div>
<div class="a xc xcc" style="left:511.7px;top:221.46px;width:33px;color:#3a3a3a"><span>20</span></div>
<div class="a tri" style="left:512.2px;top:221.06px"></div>
<div class="a xc xcc" style="left:544.7px;top:221.46px;width:32.6px;color:#3a3a3a"><span>40</span></div>
<div class="a tri" style="left:545.2px;top:221.06px"></div>
<div class="a xc xcc" style="left:577.3px;top:221.46px;width:32.9px;color:#3a3a3a"><span>204</span></div>
<div class="a tri" style="left:577.8px;top:221.06px"></div>
<div class="a xc xcc" style="left:610.2px;top:221.46px;width:39.4px;color:#3a3a3a"><span>FRAME</span></div>
<div class="a xc" style="left:350px;top:231.29px;color:#3a3a3a">FRAME</div>
<div class="a xc" style="left:396.1px;top:231.29px;color:#3a3a3a">PARTITION_1__RIB</div>
<div class="a xc xcc" style="left:485.5px;top:231.29px;width:26.2px;color:#3a3a3a"><span>5</span></div>
<div class="a tri" style="left:486px;top:230.89px"></div>
<div class="a xc xcc" style="left:511.7px;top:231.29px;width:33px;color:#3a3a3a"><span>20</span></div>
<div class="a tri" style="left:512.2px;top:230.89px"></div>
<div class="a xc xcc" style="left:544.7px;top:231.29px;width:32.6px;color:#3a3a3a"><span>40</span></div>
<div class="a tri" style="left:545.2px;top:230.89px"></div>
<div class="a xc xcc" style="left:577.3px;top:231.29px;width:32.9px;color:#3a3a3a"><span>204</span></div>
<div class="a tri" style="left:577.8px;top:230.89px"></div>
<div class="a xc xcc" style="left:610.2px;top:231.29px;width:39.4px;color:#3a3a3a"><span>FRAME</span></div>
<div class="a xc" style="left:350px;top:241.12px;color:#3a3a3a">PANEL_SKIN</div>
<div class="a xc" style="left:396.1px;top:241.12px;color:#3a3a3a">PARTITION_2__SKIN_A</div>
<div class="a xc xcc" style="left:485.5px;top:241.12px;width:26.2px;color:#3a3a3a"><span>1</span></div>
<div class="a tri" style="left:486px;top:240.72px"></div>
<div class="a xc xcc" style="left:511.7px;top:241.12px;width:33px;color:#3a3a3a"><span>9</span></div>
<div class="a tri" style="left:512.2px;top:240.72px"></div>
<div class="a xc xcc" style="left:544.7px;top:241.12px;width:32.6px;color:#3a3a3a"><span>588</span></div>
<div class="a tri" style="left:545.2px;top:240.72px"></div>
<div class="a xc xcc" style="left:577.3px;top:241.12px;width:32.9px;color:#3a3a3a"><span>1634</span></div>
<div class="a tri" style="left:577.8px;top:240.72px"></div>
<div class="a xc xcc" style="left:610.2px;top:241.12px;width:39.4px;color:#3a3a3a"><span>PANEL</span></div>
<div class="a xc" style="left:350px;top:250.95px;color:#3a3a3a">PANEL_SKIN</div>
<div class="a xc" style="left:396.1px;top:250.95px;color:#3a3a3a">PARTITION_2__SKIN_B</div>
<div class="a xc xcc" style="left:485.5px;top:250.95px;width:26.2px;color:#3a3a3a"><span>1</span></div>
<div class="a tri" style="left:486px;top:250.55px"></div>
<div class="a xc xcc" style="left:511.7px;top:250.95px;width:33px;color:#3a3a3a"><span>9</span></div>
<div class="a tri" style="left:512.2px;top:250.55px"></div>
<div class="a xc xcc" style="left:544.7px;top:250.95px;width:32.6px;color:#3a3a3a"><span>588</span></div>
<div class="a tri" style="left:545.2px;top:250.55px"></div>
<div class="a xc xcc" style="left:577.3px;top:250.95px;width:32.9px;color:#3a3a3a"><span>1634</span></div>
<div class="a tri" style="left:577.8px;top:250.55px"></div>
<div class="a xc xcc" style="left:610.2px;top:250.95px;width:39.4px;color:#3a3a3a"><span>PANEL</span></div>
<div class="a xc" style="left:350px;top:260.78px;color:#3a3a3a">FRAME</div>
<div class="a xc" style="left:396.1px;top:260.78px;color:#3a3a3a">PARTITION_2__PER_LONG</div>
<div class="a xc xcc" style="left:485.5px;top:260.78px;width:26.2px;color:#3a3a3a"><span>2</span></div>
<div class="a tri" style="left:486px;top:260.38px"></div>
<div class="a xc xcc" style="left:511.7px;top:260.78px;width:33px;color:#3a3a3a"><span>20</span></div>
<div class="a tri" style="left:512.2px;top:260.38px"></div>
<div class="a xc xcc" style="left:544.7px;top:260.78px;width:32.6px;color:#3a3a3a"><span>40</span></div>
<div class="a tri" style="left:545.2px;top:260.38px"></div>
<div class="a xc xcc" style="left:577.3px;top:260.78px;width:32.9px;color:#3a3a3a"><span>1634</span></div>
<div class="a tri" style="left:577.8px;top:260.38px"></div>
<div class="a xc xcc" style="left:610.2px;top:260.78px;width:39.4px;color:#3a3a3a"><span>FRAME</span></div>
<div class="a xc" style="left:350px;top:270.61px;color:#3a3a3a">FRAME</div>
<div class="a xc" style="left:396.1px;top:270.61px;color:#3a3a3a">PARTITION_2__PER_SHORT</div>
<div class="a xc xcc" style="left:485.5px;top:270.61px;width:26.2px;color:#3a3a3a"><span>2</span></div>
<div class="a tri" style="left:486px;top:270.21px"></div>
<div class="a xc xcc" style="left:511.7px;top:270.61px;width:33px;color:#3a3a3a"><span>20</span></div>
<div class="a tri" style="left:512.2px;top:270.21px"></div>
<div class="a xc xcc" style="left:544.7px;top:270.61px;width:32.6px;color:#3a3a3a"><span>40</span></div>
<div class="a tri" style="left:545.2px;top:270.21px"></div>
<div class="a xc xcc" style="left:577.3px;top:270.61px;width:32.9px;color:#3a3a3a"><span>548</span></div>
<div class="a tri" style="left:577.8px;top:270.21px"></div>
<div class="a xc xcc" style="left:610.2px;top:270.61px;width:39.4px;color:#3a3a3a"><span>FRAME</span></div>
<div class="a xc" style="left:350px;top:280.44px;color:#3a3a3a">FRAME</div>
<div class="a xc" style="left:396.1px;top:280.44px;color:#3a3a3a">PARTITION_2__RIB</div>
<div class="a xc xcc" style="left:485.5px;top:280.44px;width:26.2px;color:#3a3a3a"><span>7</span></div>
<div class="a tri" style="left:486px;top:280.04px"></div>
<div class="a xc xcc" style="left:511.7px;top:280.44px;width:33px;color:#3a3a3a"><span>20</span></div>
<div class="a tri" style="left:512.2px;top:280.04px"></div>
<div class="a xc xcc" style="left:544.7px;top:280.44px;width:32.6px;color:#3a3a3a"><span>40</span></div>
<div class="a tri" style="left:545.2px;top:280.04px"></div>
<div class="a xc xcc" style="left:577.3px;top:280.44px;width:32.9px;color:#3a3a3a"><span>548</span></div>
<div class="a tri" style="left:577.8px;top:280.04px"></div>
<div class="a xc xcc" style="left:610.2px;top:280.44px;width:39.4px;color:#3a3a3a"><span>FRAME</span></div>
<div class="a xc" style="left:350px;top:290.27px;color:#3a3a3a">PANEL_SKIN</div>
<div class="a xc" style="left:396.1px;top:290.27px;color:#3a3a3a">PARTITION_3__SKIN_A</div>
<div class="a xc xcc" style="left:485.5px;top:290.27px;width:26.2px;color:#3a3a3a"><span>1</span></div>
<div class="a tri" style="left:486px;top:289.87px"></div>
<div class="a xc xcc" style="left:511.7px;top:290.27px;width:33px;color:#3a3a3a"><span>9</span></div>
<div class="a tri" style="left:512.2px;top:289.87px"></div>
<div class="a xc xcc" style="left:544.7px;top:290.27px;width:32.6px;color:#3a3a3a"><span>588</span></div>
<div class="a tri" style="left:545.2px;top:289.87px"></div>
<div class="a xc xcc" style="left:577.3px;top:290.27px;width:32.9px;color:#3a3a3a"><span>200</span></div>
<div class="a tri" style="left:577.8px;top:289.87px"></div>
<div class="a xc xcc" style="left:610.2px;top:290.27px;width:39.4px;color:#3a3a3a"><span>PANEL</span></div>
<div class="a xc" style="left:350px;top:300.1px;color:#3a3a3a">PANEL_SKIN</div>
<div class="a xc" style="left:396.1px;top:300.1px;color:#3a3a3a">PARTITION_3__SKIN_B</div>
<div class="a xc xcc" style="left:485.5px;top:300.1px;width:26.2px;color:#3a3a3a"><span>1</span></div>
<div class="a tri" style="left:486px;top:299.7px"></div>
<div class="a xc xcc" style="left:511.7px;top:300.1px;width:33px;color:#3a3a3a"><span>9</span></div>
<div class="a tri" style="left:512.2px;top:299.7px"></div>
<div class="a xc xcc" style="left:544.7px;top:300.1px;width:32.6px;color:#3a3a3a"><span>588</span></div>
<div class="a tri" style="left:545.2px;top:299.7px"></div>
<div class="a xc xcc" style="left:577.3px;top:300.1px;width:32.9px;color:#3a3a3a"><span>200</span></div>
<div class="a tri" style="left:577.8px;top:299.7px"></div>
<div class="a xc xcc" style="left:610.2px;top:300.1px;width:39.4px;color:#3a3a3a"><span>PANEL</span></div>
<div class="a xc" style="left:350px;top:309.93px;color:#3a3a3a">FRAME</div>
<div class="a xc" style="left:396.1px;top:309.93px;color:#3a3a3a">PARTITION_3__PER_LONG</div>
<div class="a xc xcc" style="left:485.5px;top:309.93px;width:26.2px;color:#3a3a3a"><span>2</span></div>
<div class="a tri" style="left:486px;top:309.53px"></div>
<div class="a xc xcc" style="left:511.7px;top:309.93px;width:33px;color:#3a3a3a"><span>20</span></div>
<div class="a tri" style="left:512.2px;top:309.53px"></div>
<div class="a xc xcc" style="left:544.7px;top:309.93px;width:32.6px;color:#3a3a3a"><span>40</span></div>
<div class="a tri" style="left:545.2px;top:309.53px"></div>
<div class="a xc xcc" style="left:577.3px;top:309.93px;width:32.9px;color:#3a3a3a"><span>588</span></div>
<div class="a tri" style="left:577.8px;top:309.53px"></div>
<div class="a xc xcc" style="left:610.2px;top:309.93px;width:39.4px;color:#3a3a3a"><span>FRAME</span></div>
<div class="a xc" style="left:350px;top:319.76px;color:#3a3a3a">FRAME</div>
<div class="a xc" style="left:396.1px;top:319.76px;color:#3a3a3a">PARTITION_3__PER_SHORT</div>
<div class="a xc xcc" style="left:485.5px;top:319.76px;width:26.2px;color:#3a3a3a"><span>2</span></div>
<div class="a tri" style="left:486px;top:319.36px"></div>
<div class="a xc xcc" style="left:511.7px;top:319.76px;width:33px;color:#3a3a3a"><span>20</span></div>
<div class="a tri" style="left:512.2px;top:319.36px"></div>
<div class="a xc xcc" style="left:544.7px;top:319.76px;width:32.6px;color:#3a3a3a"><span>40</span></div>
<div class="a tri" style="left:545.2px;top:319.36px"></div>
<div class="a xc xcc" style="left:577.3px;top:319.76px;width:32.9px;color:#3a3a3a"><span>160</span></div>
<div class="a tri" style="left:577.8px;top:319.36px"></div>
<div class="a xc xcc" style="left:610.2px;top:319.76px;width:39.4px;color:#3a3a3a"><span>FRAME</span></div>
<div class="a xc" style="left:350px;top:329.59px;color:#3a3a3a">FRAME</div>
<div class="a xc" style="left:396.1px;top:329.59px;color:#3a3a3a">PARTITION_3__RIB</div>
<div class="a xc xcc" style="left:485.5px;top:329.59px;width:26.2px;color:#3a3a3a"><span>5</span></div>
<div class="a tri" style="left:486px;top:329.19px"></div>
<div class="a xc xcc" style="left:511.7px;top:329.59px;width:33px;color:#3a3a3a"><span>20</span></div>
<div class="a tri" style="left:512.2px;top:329.19px"></div>
<div class="a xc xcc" style="left:544.7px;top:329.59px;width:32.6px;color:#3a3a3a"><span>40</span></div>
<div class="a tri" style="left:545.2px;top:329.19px"></div>
<div class="a xc xcc" style="left:577.3px;top:329.59px;width:32.9px;color:#3a3a3a"><span>160</span></div>
<div class="a tri" style="left:577.8px;top:329.19px"></div>
<div class="a xc xcc" style="left:610.2px;top:329.59px;width:39.4px;color:#3a3a3a"><span>FRAME</span></div>
<div class="a" style="left:649.1px;top:210.23px;width:30.5px;height:10.83px;border:1.3px solid #217346"></div>
<div class="a" style="left:678.2px;top:219.06px;width:2.5px;height:2.5px;background:#217346"></div>
<div class="a" style="left:746px;top:92px;width:3px;height:286px;background:#e8e8e8"></div>
<div class="a" style="left:0px;top:377.7px;width:749px;height:12px;background:#e6e6e6"></div>
<div class="a" style="left:0px;top:377.7px;width:749px;height:0.8px;background:#cfcfcf"></div>
<div class="a" style="left:15px;top:379px;font-size:6px;color:#aaa;line-height:8px"><svg style="display:inline-block;vertical-align:0.05em;overflow:visible" width="0.6em" height="0.6em" viewBox="0 0 10 10"><path d="M7,1.5 L7,8.5 L2.5,5 Z" fill="currentColor"/></svg></div>
<div class="a" style="left:25px;top:379px;font-size:6px;color:#aaa;line-height:8px"><svg style="display:inline-block;vertical-align:0.05em;overflow:visible" width="0.6em" height="0.6em" viewBox="0 0 10 10"><path d="M3,1.5 L3,8.5 L7.5,5 Z" fill="currentColor"/></svg></div>
<div class="a" style="left:41px;top:377.5px;width:31px;height:10.5px;background:#fff;border-bottom:1.5px solid #217346"></div>
<div class="a" style="left:44px;top:378.5px;font-size:7px;color:#217346;line-height:9px">CutList</div>
<div class="a" style="left:84px;top:379px;width:8px;height:8px;border:1px solid #888;border-radius:50%"></div>
<div class="a" style="left:85.6px;top:378.4px;font-size:7px;color:#777;line-height:9px">+</div>
<div class="a" style="left:452px;top:378.5px;font-size:7px;color:#aaa;line-height:9px"><svg style="display:inline-block;vertical-align:-0.05em;overflow:visible" width="0.3em" height="0.75em" viewBox="0 0 4 10"><circle cx="2" cy="2" r=".7" fill="currentColor"/><circle cx="2" cy="5" r=".7" fill="currentColor"/><circle cx="2" cy="8" r=".7" fill="currentColor"/></svg></div>
<div class="a" style="left:460px;top:379px;width:289px;height:9px;background:#fff;border:1px solid #d0d0d0"></div>
<div class="a" style="left:723px;top:380px;width:15px;height:7px;background:#e3e3e3"></div>
<div class="a" style="left:461px;top:378.8px;font-size:6px;color:#555;line-height:8px"><svg style="display:inline-block;vertical-align:0.05em;overflow:visible" width="0.6em" height="0.6em" viewBox="0 0 10 10"><path d="M7,1.5 L7,8.5 L2.5,5 Z" fill="currentColor"/></svg></div>
<div class="a" style="left:740px;top:378.8px;font-size:6px;color:#555;line-height:8px"><svg style="display:inline-block;vertical-align:0.05em;overflow:visible" width="0.6em" height="0.6em" viewBox="0 0 10 10"><path d="M3,1.5 L3,8.5 L7.5,5 Z" fill="currentColor"/></svg></div>
<div class="a" style="left:0px;top:389.5px;width:749px;height:4px;background:#f3f3f3"></div>
<div class="a" style="left:620px;top:390px;width:15px;height:3px;background:#d2d2d2"></div>
<div class="a" style="left:640px;top:391px;width:7px;height:2px;border:1px solid #999;border-bottom:none"></div>
<div class="a" style="left:656px;top:391px;width:6px;height:2px;border:1px solid #999;border-bottom:none"></div>
<div class="a" style="left:694.5px;top:390.5px;width:2px;height:2.5px;background:#555"></div>
<div class="a" style="left:727.5px;top:391px;width:1px;height:2px;background:#777"></div>
<div class="a" style="left:736px;top:389.5px;font-size:5px;color:#555;line-height:6px">90%</div>
</div><svg class="a" style="left:0;top:0;z-index:50" width="1279" height="992" viewBox="0 0 1279 992">
<path d="M955.5,127.2 L955.5,341 L471.5,341 L471.5,597" fill="none" stroke="#f96900" stroke-width="4.8" stroke-dasharray="15 5" stroke-linejoin="round"/>
<polygon points="464.2,596.8 478.8,596.8 471.5,611.5" fill="#f96900"/>
<path d="M1199.2,118.8 L1199.2,364.2 L1073.5,364.2 L1073.5,595.2" fill="none" stroke="#f96900" stroke-width="4.8" stroke-dasharray="15 5" stroke-linejoin="round"/>
<polygon points="1066.1,595 1080.8,595 1073.4,609.8" fill="#f96900"/>
</svg>
</body></html>
